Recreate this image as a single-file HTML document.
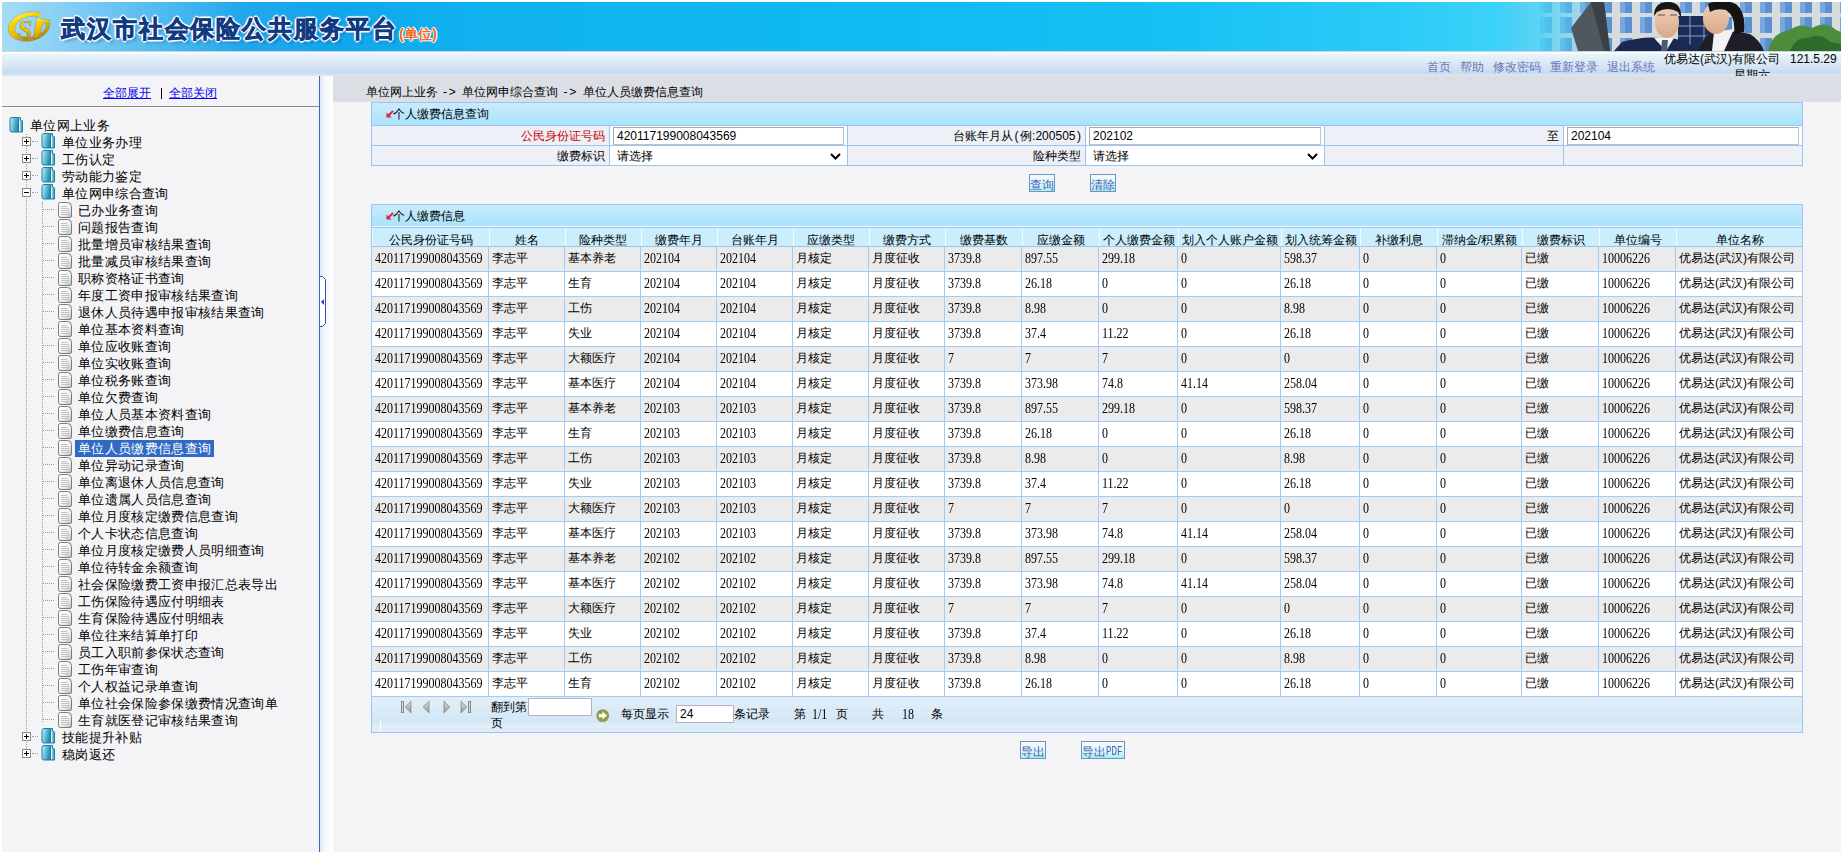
<!DOCTYPE html><html><head><meta charset="utf-8"><style>

*{box-sizing:border-box}
svg{display:block}
html,body{margin:0;padding:0;background:#fff;width:1847px;height:852px;overflow:hidden}
body{font-family:"Liberation Sans",sans-serif;font-size:12px;color:#000;position:relative}
.a{position:absolute;white-space:nowrap}
.hdr{left:2px;top:2px;width:1839px;height:49px;background:linear-gradient(90deg,#a6dcf5 0%,#8ad0f4 3%,#56bdf0 8%,#22a8ec 13%,#12a6ec 18%,#10b2f0 26%,#10b9f2 45%,#14c0f4 62%,#2ccbf7 76%,#44d6fa 84%,#50d8fa 100%)}
.tb{left:2px;top:51px;width:1839px;height:25px;background:linear-gradient(180deg,#c8d4de 0px,#c8d4de 1px,#ffffff 1px,#ffffff 2px,#eaf4fb 3px,#d8e8f6 13px,#c6daf0 22px,#d4e2f0 23px,#dde6ee 25px)}
.tl{color:#6877b8;font-size:12px}
.lp{left:2px;top:76px;width:317px;height:776px;background:#f4f4f7}
.spl{left:319px;top:76px;width:1px;height:776px;background:#3e64c4}
.rp{left:320px;top:76px;width:1521px;height:776px;background:#f4f4f7}
.bc{left:333px;top:76px;width:1508px;height:26px;background:#dcdee5}
.pnl{border:1px solid #9cc4f2}
.ttl{background:linear-gradient(180deg,#c9ebfc 0%,#a9e3fa 100%)}
.lbl{background:#eef0f8;text-align:right}
.inp{background:#fff;border:1px solid #a8a8b0;border-right-color:#c0c0c8;border-bottom-color:#c0c0c8}
.btn{border:1px solid #6d94bd;background:linear-gradient(180deg,#f4fdfd 0%,#e0f8f8 50%,#a8eef2 100%);color:#4b5cb9;font-size:12px;overflow:hidden;line-height:16px}
.tr{color:#000}
.sel{background:#316ac5;color:#fff}

</style></head><body>
<div class="a hdr"></div>
<svg class="a" style="left:6px;top:9px" width="46" height="36" viewBox="0 0 46 36">
<defs><linearGradient id="lg" x1="0" y1="0" x2="0.3" y2="1"><stop offset="0" stop-color="#fff6a0"/><stop offset="0.3" stop-color="#f8d400"/><stop offset="0.7" stop-color="#eab800"/><stop offset="1" stop-color="#c88c00"/></linearGradient>
<mask id="lm"><rect x="0" y="0" width="46" height="36" fill="#fff"/><polygon points="24,17 46,2 46,14" fill="#000"/></mask></defs>
<g mask="url(#lm)" transform="rotate(-12 23 17.5)">
<path fill-rule="evenodd" fill="url(#lg)" stroke="#3a6aa8" stroke-width="0.5" stroke-opacity="0.5" d="M2,17.5 a21,14.5 0 1,0 42,0 a21,14.5 0 1,0 -42,0 Z M8.5,18 a16,10.2 0 1,0 32,0 a16,10.2 0 1,0 -32,0 Z"/>
</g>
<text x="11.5" y="30" font-family="Liberation Serif" font-style="italic" font-weight="bold" font-size="27" fill="url(#lg)" stroke="#3a6aa8" stroke-width="0.6" stroke-opacity="0.6">S</text>
<polygon points="31,8.5 44,11.5 43,14.5 37.5,13.5 32.5,29.5 27,29.5" fill="url(#lg)" stroke="#3a6aa8" stroke-width="0.5" stroke-opacity="0.6"/>
</svg>
<div class="a" style="left:61px;top:14px;line-height:30px;font-family:'Liberation Serif',serif;font-weight:bold;font-size:24px;letter-spacing:1.9px;color:#123a80;-webkit-text-stroke:0.7px #123a80;text-shadow:2px 0 1px #fff,-2px 0 1px #fff,0 2px 1px #fff,0 -2px 1px #fff,1px 1px 1px #fff,-1px -1px 1px #fff,1px -1px 1px #fff,-1px 1px 1px #fff,3px 3px 3px rgba(0,40,120,.35)">武汉市社会保险公共服务平台</div>
<div class="a" style="left:399px;top:25px;line-height:18px;font-weight:bold;font-size:14px;color:#f36a1c;text-shadow:1px 0 0 #fff,-1px 0 0 #fff,0 1px 0 #fff,0 -1px 0 #fff"><span style="font-size:15px">(</span>单位<span style="font-size:15px">)</span></div>
<svg class="a" style="left:1500px;top:2px" width="341" height="49" viewBox="0 0 341 49"><defs><linearGradient id="fade" x1="0" y1="0" x2="341" y2="0" gradientUnits="userSpaceOnUse"><stop offset="0" stop-color="#40d0f8" stop-opacity="1"/><stop offset="0.12" stop-color="#48d2f8" stop-opacity="0.85"/><stop offset="0.33" stop-color="#60c8f0" stop-opacity="0.0"/></linearGradient><linearGradient id="skin" x1="0" y1="0" x2="0" y2="1"><stop offset="0" stop-color="#f0d0b8"/><stop offset="1" stop-color="#d8a888"/></linearGradient></defs><rect x="0" y="0" width="341" height="49" fill="#d6dcde"/><rect x="40" y="0" width="12" height="11" fill="#5c90d0"/><rect x="40" y="0" width="5" height="11" fill="#88b8e8" opacity="0.6"/><rect x="40" y="15" width="12" height="16" fill="#5c90d0"/><rect x="40" y="15" width="5" height="16" fill="#88b8e8" opacity="0.6"/><rect x="40" y="36" width="12" height="13" fill="#5c90d0"/><rect x="40" y="36" width="5" height="13" fill="#88b8e8" opacity="0.6"/><rect x="60" y="0" width="12" height="11" fill="#5c90d0"/><rect x="60" y="0" width="5" height="11" fill="#88b8e8" opacity="0.6"/><rect x="60" y="15" width="12" height="16" fill="#5c90d0"/><rect x="60" y="15" width="5" height="16" fill="#88b8e8" opacity="0.6"/><rect x="60" y="36" width="12" height="13" fill="#5c90d0"/><rect x="60" y="36" width="5" height="13" fill="#88b8e8" opacity="0.6"/><rect x="80" y="0" width="12" height="11" fill="#5c90d0"/><rect x="80" y="0" width="5" height="11" fill="#88b8e8" opacity="0.6"/><rect x="80" y="15" width="12" height="16" fill="#5c90d0"/><rect x="80" y="15" width="5" height="16" fill="#88b8e8" opacity="0.6"/><rect x="80" y="36" width="12" height="13" fill="#5c90d0"/><rect x="80" y="36" width="5" height="13" fill="#88b8e8" opacity="0.6"/><rect x="100" y="0" width="12" height="11" fill="#5c90d0"/><rect x="100" y="0" width="5" height="11" fill="#88b8e8" opacity="0.6"/><rect x="100" y="15" width="12" height="16" fill="#5c90d0"/><rect x="100" y="15" width="5" height="16" fill="#88b8e8" opacity="0.6"/><rect x="100" y="36" width="12" height="13" fill="#5c90d0"/><rect x="100" y="36" width="5" height="13" fill="#88b8e8" opacity="0.6"/><rect x="120" y="0" width="12" height="11" fill="#5c90d0"/><rect x="120" y="0" width="5" height="11" fill="#88b8e8" opacity="0.6"/><rect x="120" y="15" width="12" height="16" fill="#5c90d0"/><rect x="120" y="15" width="5" height="16" fill="#88b8e8" opacity="0.6"/><rect x="120" y="36" width="12" height="13" fill="#5c90d0"/><rect x="120" y="36" width="5" height="13" fill="#88b8e8" opacity="0.6"/><rect x="140" y="0" width="12" height="11" fill="#5c90d0"/><rect x="140" y="0" width="5" height="11" fill="#88b8e8" opacity="0.6"/><rect x="140" y="15" width="12" height="16" fill="#5c90d0"/><rect x="140" y="15" width="5" height="16" fill="#88b8e8" opacity="0.6"/><rect x="140" y="36" width="12" height="13" fill="#5c90d0"/><rect x="140" y="36" width="5" height="13" fill="#88b8e8" opacity="0.6"/><rect x="160" y="0" width="12" height="11" fill="#5c90d0"/><rect x="160" y="0" width="5" height="11" fill="#88b8e8" opacity="0.6"/><rect x="160" y="15" width="12" height="16" fill="#5c90d0"/><rect x="160" y="15" width="5" height="16" fill="#88b8e8" opacity="0.6"/><rect x="160" y="36" width="12" height="13" fill="#5c90d0"/><rect x="160" y="36" width="5" height="13" fill="#88b8e8" opacity="0.6"/><rect x="180" y="0" width="12" height="11" fill="#5c90d0"/><rect x="180" y="0" width="5" height="11" fill="#88b8e8" opacity="0.6"/><rect x="180" y="15" width="12" height="16" fill="#5c90d0"/><rect x="180" y="15" width="5" height="16" fill="#88b8e8" opacity="0.6"/><rect x="180" y="36" width="12" height="13" fill="#5c90d0"/><rect x="180" y="36" width="5" height="13" fill="#88b8e8" opacity="0.6"/><rect x="200" y="0" width="12" height="11" fill="#5c90d0"/><rect x="200" y="0" width="5" height="11" fill="#88b8e8" opacity="0.6"/><rect x="200" y="15" width="12" height="16" fill="#5c90d0"/><rect x="200" y="15" width="5" height="16" fill="#88b8e8" opacity="0.6"/><rect x="200" y="36" width="12" height="13" fill="#5c90d0"/><rect x="200" y="36" width="5" height="13" fill="#88b8e8" opacity="0.6"/><rect x="220" y="0" width="12" height="11" fill="#5c90d0"/><rect x="220" y="0" width="5" height="11" fill="#88b8e8" opacity="0.6"/><rect x="220" y="15" width="12" height="16" fill="#5c90d0"/><rect x="220" y="15" width="5" height="16" fill="#88b8e8" opacity="0.6"/><rect x="220" y="36" width="12" height="13" fill="#5c90d0"/><rect x="220" y="36" width="5" height="13" fill="#88b8e8" opacity="0.6"/><rect x="240" y="0" width="12" height="11" fill="#5c90d0"/><rect x="240" y="0" width="5" height="11" fill="#88b8e8" opacity="0.6"/><rect x="240" y="15" width="12" height="16" fill="#5c90d0"/><rect x="240" y="15" width="5" height="16" fill="#88b8e8" opacity="0.6"/><rect x="240" y="36" width="12" height="13" fill="#5c90d0"/><rect x="240" y="36" width="5" height="13" fill="#88b8e8" opacity="0.6"/><rect x="260" y="0" width="12" height="11" fill="#5c90d0"/><rect x="260" y="0" width="5" height="11" fill="#88b8e8" opacity="0.6"/><rect x="260" y="15" width="12" height="16" fill="#5c90d0"/><rect x="260" y="15" width="5" height="16" fill="#88b8e8" opacity="0.6"/><rect x="260" y="36" width="12" height="13" fill="#5c90d0"/><rect x="260" y="36" width="5" height="13" fill="#88b8e8" opacity="0.6"/><rect x="280" y="0" width="12" height="11" fill="#5c90d0"/><rect x="280" y="0" width="5" height="11" fill="#88b8e8" opacity="0.6"/><rect x="280" y="15" width="12" height="16" fill="#5c90d0"/><rect x="280" y="15" width="5" height="16" fill="#88b8e8" opacity="0.6"/><rect x="280" y="36" width="12" height="13" fill="#5c90d0"/><rect x="280" y="36" width="5" height="13" fill="#88b8e8" opacity="0.6"/><rect x="300" y="0" width="12" height="11" fill="#5c90d0"/><rect x="300" y="0" width="5" height="11" fill="#88b8e8" opacity="0.6"/><rect x="300" y="15" width="12" height="16" fill="#5c90d0"/><rect x="300" y="15" width="5" height="16" fill="#88b8e8" opacity="0.6"/><rect x="300" y="36" width="12" height="13" fill="#5c90d0"/><rect x="300" y="36" width="5" height="13" fill="#88b8e8" opacity="0.6"/><rect x="320" y="0" width="12" height="11" fill="#5c90d0"/><rect x="320" y="0" width="5" height="11" fill="#88b8e8" opacity="0.6"/><rect x="320" y="15" width="12" height="16" fill="#5c90d0"/><rect x="320" y="15" width="5" height="16" fill="#88b8e8" opacity="0.6"/><rect x="320" y="36" width="12" height="13" fill="#5c90d0"/><rect x="320" y="36" width="5" height="13" fill="#88b8e8" opacity="0.6"/><rect x="340" y="0" width="12" height="11" fill="#5c90d0"/><rect x="340" y="0" width="5" height="11" fill="#88b8e8" opacity="0.6"/><rect x="340" y="15" width="12" height="16" fill="#5c90d0"/><rect x="340" y="15" width="5" height="16" fill="#88b8e8" opacity="0.6"/><rect x="340" y="36" width="12" height="13" fill="#5c90d0"/><rect x="340" y="36" width="5" height="13" fill="#88b8e8" opacity="0.6"/><rect x="0" y="0" width="341" height="49" fill="url(#fade)"/><rect x="178" y="14" width="44" height="35" fill="#1a2c58"/><path d="M178,24h44M178,34h44M190,14v35M204,14v35" stroke="#8aa0c0" stroke-width="1"/><polygon points="71,26 91,0 104,0 110,49 78,49" fill="#50585f"/><polygon points="91,0 104,0 110,49 104,49" fill="#3a4046"/><g transform="translate(-6,0)"><path d="M120,49 L128,40 Q150,34 165,36 L178,36 Q196,40 204,49 Z" fill="#1c2850"/><path d="M160,36 L180,36 L172,49 Z" fill="#f4f4f4"/><path d="M168,38 L174,38 L173,49 L167,49 Z" fill="#4a5a78"/><ellipse cx="173" cy="20" rx="12" ry="16" fill="url(#skin)"/><path d="M160,14 Q160,0 174,0 Q188,0 187,16 L184,10 Q174,4 163,10 Z" fill="#181818"/><path d="M164,13h7M176,13h7" stroke="#555" stroke-width="1.2"/></g><g transform="translate(-12,0)"><path d="M210,49 L218,34 Q240,26 262,32 Q272,38 276,49 Z" fill="#1e1e26"/><path d="M226,30 L246,27 L236,49 L224,49 Z" fill="#f2f2f2"/><ellipse cx="228" cy="16" rx="13" ry="16" fill="url(#skin)"/><path d="M220,2 Q232,-4 248,2 Q258,10 256,30 L246,32 Q248,14 238,8 Q228,6 222,10 Z" fill="#141414"/></g><path d="M268,49 Q272,30 290,28 Q300,20 312,26 Q326,18 336,28 L341,30 L341,49 Z" fill="#4c8c3c"/><path d="M290,49 Q296,34 308,36 Q320,30 330,40 L341,42 L341,49 Z" fill="#2e6a2c"/></svg>
<div class="a tb"></div>
<div class="a tl" style="left:1427px;top:59px;line-height:16px">首页</div>
<div class="a tl" style="left:1460px;top:59px;line-height:16px">帮助</div>
<div class="a tl" style="left:1493px;top:59px;line-height:16px">修改密码</div>
<div class="a tl" style="left:1550px;top:59px;line-height:16px">重新登录</div>
<div class="a tl" style="left:1607px;top:59px;line-height:16px">退出系统</div>
<div class="a" style="left:1664px;top:51px;line-height:16px">优易达(武汉)有限公司</div>
<div class="a" style="left:1790px;top:51px;line-height:16px">121.5.29</div>
<div class="a" style="left:1734px;top:51px;width:40px;height:25px;overflow:hidden"><div style="position:absolute;top:16px;line-height:16px">星期六</div></div>
<div class="a lp"></div>
<div class="a" style="left:103px;top:85px;line-height:16px;color:#0000ee;text-decoration:underline">全部展开</div>
<div class="a" style="left:161px;top:88px;width:1px;height:11px;background:#000"></div>
<div class="a" style="left:169px;top:85px;line-height:16px;color:#0000ee;text-decoration:underline">全部关闭</div>
<div class="a" style="left:2px;top:106px;width:317px;height:1px;background:#8a8a8a"></div>
<div class="a" style="left:2px;top:107px;width:317px;height:1px;background:#fafafa"></div>
<div class="a" style="left:9px;top:117px"><svg width="15" height="16" viewBox="0 0 15 16"><defs><linearGradient id="fg0" x1="0" y1="0" x2="1" y2="0.3"><stop offset="0" stop-color="#e4f8fc"/><stop offset="0.35" stop-color="#7fd0e8"/><stop offset="1" stop-color="#1e8eb2"/></linearGradient><linearGradient id="fh0" x1="0" y1="0" x2="1" y2="0"><stop offset="0" stop-color="#c8f0fa"/><stop offset="1" stop-color="#2a98bc"/></linearGradient></defs>
<path d="M1,2.5 Q1,0.5 3,0.5 L9.5,0.5 L9.5,15 L3,15 Q1,15 1,13 Z" fill="url(#fg0)" stroke="#1f7f9e" stroke-width="1"/>
<path d="M9.5,0.5 L11.5,0.5 L11.5,3 L13.5,4 L13.5,15 L9.5,15 Z" fill="url(#fh0)" stroke="#1f7f9e" stroke-width="1"/>
<path d="M10.5,3.5 L10.5,14" stroke="#ffffff" stroke-width="1" opacity="0.8"/></svg></div>
<div class="a" style="left:30px;top:117px;line-height:18px;font-size:13.33px;letter-spacing:0.33px;">单位网上业务</div>
<div class="a" style="left:26px;top:134px;width:1px;height:621px;border-left:1px dotted #a0a0a0"></div>
<div class="a" style="left:42px;top:202px;width:1px;height:520px;border-left:1px dotted #a0a0a0"></div>
<div class="a" style="left:22px;top:137px;width:9px;height:9px;border:1px solid #8c8c7c;background:#fff"></div><div class="a" style="left:24px;top:141px;width:5px;height:1px;background:#000"></div><div class="a" style="left:26px;top:139px;width:1px;height:5px;background:#000"></div>
<div class="a" style="left:32px;top:141px;width:6px;height:1px;border-top:1px dotted #a0a0a0"></div>
<div class="a" style="left:41px;top:133px"><svg width="15" height="16" viewBox="0 0 15 16"><defs><linearGradient id="fg1" x1="0" y1="0" x2="1" y2="0.3"><stop offset="0" stop-color="#e4f8fc"/><stop offset="0.35" stop-color="#7fd0e8"/><stop offset="1" stop-color="#1e8eb2"/></linearGradient><linearGradient id="fh1" x1="0" y1="0" x2="1" y2="0"><stop offset="0" stop-color="#c8f0fa"/><stop offset="1" stop-color="#2a98bc"/></linearGradient></defs>
<path d="M1,2.5 Q1,0.5 3,0.5 L9.5,0.5 L9.5,15 L3,15 Q1,15 1,13 Z" fill="url(#fg1)" stroke="#1f7f9e" stroke-width="1"/>
<path d="M9.5,0.5 L11.5,0.5 L11.5,3 L13.5,4 L13.5,15 L9.5,15 Z" fill="url(#fh1)" stroke="#1f7f9e" stroke-width="1"/>
<path d="M10.5,3.5 L10.5,14" stroke="#ffffff" stroke-width="1" opacity="0.8"/></svg></div>
<div class="a" style="left:62px;top:134px;line-height:18px;font-size:13.33px;letter-spacing:0.33px;">单位业务办理</div>
<div class="a" style="left:22px;top:154px;width:9px;height:9px;border:1px solid #8c8c7c;background:#fff"></div><div class="a" style="left:24px;top:158px;width:5px;height:1px;background:#000"></div><div class="a" style="left:26px;top:156px;width:1px;height:5px;background:#000"></div>
<div class="a" style="left:32px;top:158px;width:6px;height:1px;border-top:1px dotted #a0a0a0"></div>
<div class="a" style="left:41px;top:150px"><svg width="15" height="16" viewBox="0 0 15 16"><defs><linearGradient id="fg2" x1="0" y1="0" x2="1" y2="0.3"><stop offset="0" stop-color="#e4f8fc"/><stop offset="0.35" stop-color="#7fd0e8"/><stop offset="1" stop-color="#1e8eb2"/></linearGradient><linearGradient id="fh2" x1="0" y1="0" x2="1" y2="0"><stop offset="0" stop-color="#c8f0fa"/><stop offset="1" stop-color="#2a98bc"/></linearGradient></defs>
<path d="M1,2.5 Q1,0.5 3,0.5 L9.5,0.5 L9.5,15 L3,15 Q1,15 1,13 Z" fill="url(#fg2)" stroke="#1f7f9e" stroke-width="1"/>
<path d="M9.5,0.5 L11.5,0.5 L11.5,3 L13.5,4 L13.5,15 L9.5,15 Z" fill="url(#fh2)" stroke="#1f7f9e" stroke-width="1"/>
<path d="M10.5,3.5 L10.5,14" stroke="#ffffff" stroke-width="1" opacity="0.8"/></svg></div>
<div class="a" style="left:62px;top:151px;line-height:18px;font-size:13.33px;letter-spacing:0.33px;">工伤认定</div>
<div class="a" style="left:22px;top:171px;width:9px;height:9px;border:1px solid #8c8c7c;background:#fff"></div><div class="a" style="left:24px;top:175px;width:5px;height:1px;background:#000"></div><div class="a" style="left:26px;top:173px;width:1px;height:5px;background:#000"></div>
<div class="a" style="left:32px;top:175px;width:6px;height:1px;border-top:1px dotted #a0a0a0"></div>
<div class="a" style="left:41px;top:167px"><svg width="15" height="16" viewBox="0 0 15 16"><defs><linearGradient id="fg3" x1="0" y1="0" x2="1" y2="0.3"><stop offset="0" stop-color="#e4f8fc"/><stop offset="0.35" stop-color="#7fd0e8"/><stop offset="1" stop-color="#1e8eb2"/></linearGradient><linearGradient id="fh3" x1="0" y1="0" x2="1" y2="0"><stop offset="0" stop-color="#c8f0fa"/><stop offset="1" stop-color="#2a98bc"/></linearGradient></defs>
<path d="M1,2.5 Q1,0.5 3,0.5 L9.5,0.5 L9.5,15 L3,15 Q1,15 1,13 Z" fill="url(#fg3)" stroke="#1f7f9e" stroke-width="1"/>
<path d="M9.5,0.5 L11.5,0.5 L11.5,3 L13.5,4 L13.5,15 L9.5,15 Z" fill="url(#fh3)" stroke="#1f7f9e" stroke-width="1"/>
<path d="M10.5,3.5 L10.5,14" stroke="#ffffff" stroke-width="1" opacity="0.8"/></svg></div>
<div class="a" style="left:62px;top:168px;line-height:18px;font-size:13.33px;letter-spacing:0.33px;">劳动能力鉴定</div>
<div class="a" style="left:22px;top:188px;width:9px;height:9px;border:1px solid #8c8c7c;background:#fff"></div><div class="a" style="left:24px;top:192px;width:5px;height:1px;background:#000"></div>
<div class="a" style="left:32px;top:192px;width:6px;height:1px;border-top:1px dotted #a0a0a0"></div>
<div class="a" style="left:41px;top:184px"><svg width="15" height="16" viewBox="0 0 15 16"><defs><linearGradient id="fg4" x1="0" y1="0" x2="1" y2="0.3"><stop offset="0" stop-color="#e4f8fc"/><stop offset="0.35" stop-color="#7fd0e8"/><stop offset="1" stop-color="#1e8eb2"/></linearGradient><linearGradient id="fh4" x1="0" y1="0" x2="1" y2="0"><stop offset="0" stop-color="#c8f0fa"/><stop offset="1" stop-color="#2a98bc"/></linearGradient></defs>
<path d="M1,2.5 Q1,0.5 3,0.5 L9.5,0.5 L9.5,15 L3,15 Q1,15 1,13 Z" fill="url(#fg4)" stroke="#1f7f9e" stroke-width="1"/>
<path d="M9.5,0.5 L11.5,0.5 L11.5,3 L13.5,4 L13.5,15 L9.5,15 Z" fill="url(#fh4)" stroke="#1f7f9e" stroke-width="1"/>
<path d="M10.5,3.5 L10.5,14" stroke="#ffffff" stroke-width="1" opacity="0.8"/></svg></div>
<div class="a" style="left:62px;top:185px;line-height:18px;font-size:13.33px;letter-spacing:0.33px;">单位网申综合查询</div>
<div class="a" style="left:43px;top:209px;width:11px;height:1px;border-top:1px dotted #a0a0a0"></div>
<div class="a" style="left:58px;top:202px"><svg width="15" height="17" viewBox="0 0 15 17"><defs><linearGradient id="pg" x1="0" y1="0" x2="1" y2="1"><stop offset="0" stop-color="#ffffff"/><stop offset="0.6" stop-color="#f0f0f0"/><stop offset="1" stop-color="#b8b8b8"/></linearGradient></defs>
<path d="M2.5,0.5 L9.5,0.5 Q13.5,0.5 13.5,4.5 L13.5,14 Q13.5,15.5 12,15.5 L3,15.5 Q0.5,15.5 0.5,13.5 L0.5,2.5 Q0.5,0.5 2.5,0.5 Z" fill="url(#pg)" stroke="#7c7c7c" stroke-width="1"/>
<path d="M3,4.5h6M3,6.5h8M3,8.5h8M3,10.5h8M3,12.5h8" stroke="#c4c4c4" stroke-width="1"/></svg></div>
<div class="a" style="left:78px;top:202px;line-height:18px;font-size:13.33px;letter-spacing:0.33px;">已办业务查询</div>
<div class="a" style="left:43px;top:226px;width:11px;height:1px;border-top:1px dotted #a0a0a0"></div>
<div class="a" style="left:58px;top:219px"><svg width="15" height="17" viewBox="0 0 15 17"><defs><linearGradient id="pg" x1="0" y1="0" x2="1" y2="1"><stop offset="0" stop-color="#ffffff"/><stop offset="0.6" stop-color="#f0f0f0"/><stop offset="1" stop-color="#b8b8b8"/></linearGradient></defs>
<path d="M2.5,0.5 L9.5,0.5 Q13.5,0.5 13.5,4.5 L13.5,14 Q13.5,15.5 12,15.5 L3,15.5 Q0.5,15.5 0.5,13.5 L0.5,2.5 Q0.5,0.5 2.5,0.5 Z" fill="url(#pg)" stroke="#7c7c7c" stroke-width="1"/>
<path d="M3,4.5h6M3,6.5h8M3,8.5h8M3,10.5h8M3,12.5h8" stroke="#c4c4c4" stroke-width="1"/></svg></div>
<div class="a" style="left:78px;top:219px;line-height:18px;font-size:13.33px;letter-spacing:0.33px;">问题报告查询</div>
<div class="a" style="left:43px;top:243px;width:11px;height:1px;border-top:1px dotted #a0a0a0"></div>
<div class="a" style="left:58px;top:236px"><svg width="15" height="17" viewBox="0 0 15 17"><defs><linearGradient id="pg" x1="0" y1="0" x2="1" y2="1"><stop offset="0" stop-color="#ffffff"/><stop offset="0.6" stop-color="#f0f0f0"/><stop offset="1" stop-color="#b8b8b8"/></linearGradient></defs>
<path d="M2.5,0.5 L9.5,0.5 Q13.5,0.5 13.5,4.5 L13.5,14 Q13.5,15.5 12,15.5 L3,15.5 Q0.5,15.5 0.5,13.5 L0.5,2.5 Q0.5,0.5 2.5,0.5 Z" fill="url(#pg)" stroke="#7c7c7c" stroke-width="1"/>
<path d="M3,4.5h6M3,6.5h8M3,8.5h8M3,10.5h8M3,12.5h8" stroke="#c4c4c4" stroke-width="1"/></svg></div>
<div class="a" style="left:78px;top:236px;line-height:18px;font-size:13.33px;letter-spacing:0.33px;">批量增员审核结果查询</div>
<div class="a" style="left:43px;top:260px;width:11px;height:1px;border-top:1px dotted #a0a0a0"></div>
<div class="a" style="left:58px;top:253px"><svg width="15" height="17" viewBox="0 0 15 17"><defs><linearGradient id="pg" x1="0" y1="0" x2="1" y2="1"><stop offset="0" stop-color="#ffffff"/><stop offset="0.6" stop-color="#f0f0f0"/><stop offset="1" stop-color="#b8b8b8"/></linearGradient></defs>
<path d="M2.5,0.5 L9.5,0.5 Q13.5,0.5 13.5,4.5 L13.5,14 Q13.5,15.5 12,15.5 L3,15.5 Q0.5,15.5 0.5,13.5 L0.5,2.5 Q0.5,0.5 2.5,0.5 Z" fill="url(#pg)" stroke="#7c7c7c" stroke-width="1"/>
<path d="M3,4.5h6M3,6.5h8M3,8.5h8M3,10.5h8M3,12.5h8" stroke="#c4c4c4" stroke-width="1"/></svg></div>
<div class="a" style="left:78px;top:253px;line-height:18px;font-size:13.33px;letter-spacing:0.33px;">批量减员审核结果查询</div>
<div class="a" style="left:43px;top:277px;width:11px;height:1px;border-top:1px dotted #a0a0a0"></div>
<div class="a" style="left:58px;top:270px"><svg width="15" height="17" viewBox="0 0 15 17"><defs><linearGradient id="pg" x1="0" y1="0" x2="1" y2="1"><stop offset="0" stop-color="#ffffff"/><stop offset="0.6" stop-color="#f0f0f0"/><stop offset="1" stop-color="#b8b8b8"/></linearGradient></defs>
<path d="M2.5,0.5 L9.5,0.5 Q13.5,0.5 13.5,4.5 L13.5,14 Q13.5,15.5 12,15.5 L3,15.5 Q0.5,15.5 0.5,13.5 L0.5,2.5 Q0.5,0.5 2.5,0.5 Z" fill="url(#pg)" stroke="#7c7c7c" stroke-width="1"/>
<path d="M3,4.5h6M3,6.5h8M3,8.5h8M3,10.5h8M3,12.5h8" stroke="#c4c4c4" stroke-width="1"/></svg></div>
<div class="a" style="left:78px;top:270px;line-height:18px;font-size:13.33px;letter-spacing:0.33px;">职称资格证书查询</div>
<div class="a" style="left:43px;top:294px;width:11px;height:1px;border-top:1px dotted #a0a0a0"></div>
<div class="a" style="left:58px;top:287px"><svg width="15" height="17" viewBox="0 0 15 17"><defs><linearGradient id="pg" x1="0" y1="0" x2="1" y2="1"><stop offset="0" stop-color="#ffffff"/><stop offset="0.6" stop-color="#f0f0f0"/><stop offset="1" stop-color="#b8b8b8"/></linearGradient></defs>
<path d="M2.5,0.5 L9.5,0.5 Q13.5,0.5 13.5,4.5 L13.5,14 Q13.5,15.5 12,15.5 L3,15.5 Q0.5,15.5 0.5,13.5 L0.5,2.5 Q0.5,0.5 2.5,0.5 Z" fill="url(#pg)" stroke="#7c7c7c" stroke-width="1"/>
<path d="M3,4.5h6M3,6.5h8M3,8.5h8M3,10.5h8M3,12.5h8" stroke="#c4c4c4" stroke-width="1"/></svg></div>
<div class="a" style="left:78px;top:287px;line-height:18px;font-size:13.33px;letter-spacing:0.33px;">年度工资申报审核结果查询</div>
<div class="a" style="left:43px;top:311px;width:11px;height:1px;border-top:1px dotted #a0a0a0"></div>
<div class="a" style="left:58px;top:304px"><svg width="15" height="17" viewBox="0 0 15 17"><defs><linearGradient id="pg" x1="0" y1="0" x2="1" y2="1"><stop offset="0" stop-color="#ffffff"/><stop offset="0.6" stop-color="#f0f0f0"/><stop offset="1" stop-color="#b8b8b8"/></linearGradient></defs>
<path d="M2.5,0.5 L9.5,0.5 Q13.5,0.5 13.5,4.5 L13.5,14 Q13.5,15.5 12,15.5 L3,15.5 Q0.5,15.5 0.5,13.5 L0.5,2.5 Q0.5,0.5 2.5,0.5 Z" fill="url(#pg)" stroke="#7c7c7c" stroke-width="1"/>
<path d="M3,4.5h6M3,6.5h8M3,8.5h8M3,10.5h8M3,12.5h8" stroke="#c4c4c4" stroke-width="1"/></svg></div>
<div class="a" style="left:78px;top:304px;line-height:18px;font-size:13.33px;letter-spacing:0.33px;">退休人员待遇申报审核结果查询</div>
<div class="a" style="left:43px;top:328px;width:11px;height:1px;border-top:1px dotted #a0a0a0"></div>
<div class="a" style="left:58px;top:321px"><svg width="15" height="17" viewBox="0 0 15 17"><defs><linearGradient id="pg" x1="0" y1="0" x2="1" y2="1"><stop offset="0" stop-color="#ffffff"/><stop offset="0.6" stop-color="#f0f0f0"/><stop offset="1" stop-color="#b8b8b8"/></linearGradient></defs>
<path d="M2.5,0.5 L9.5,0.5 Q13.5,0.5 13.5,4.5 L13.5,14 Q13.5,15.5 12,15.5 L3,15.5 Q0.5,15.5 0.5,13.5 L0.5,2.5 Q0.5,0.5 2.5,0.5 Z" fill="url(#pg)" stroke="#7c7c7c" stroke-width="1"/>
<path d="M3,4.5h6M3,6.5h8M3,8.5h8M3,10.5h8M3,12.5h8" stroke="#c4c4c4" stroke-width="1"/></svg></div>
<div class="a" style="left:78px;top:321px;line-height:18px;font-size:13.33px;letter-spacing:0.33px;">单位基本资料查询</div>
<div class="a" style="left:43px;top:345px;width:11px;height:1px;border-top:1px dotted #a0a0a0"></div>
<div class="a" style="left:58px;top:338px"><svg width="15" height="17" viewBox="0 0 15 17"><defs><linearGradient id="pg" x1="0" y1="0" x2="1" y2="1"><stop offset="0" stop-color="#ffffff"/><stop offset="0.6" stop-color="#f0f0f0"/><stop offset="1" stop-color="#b8b8b8"/></linearGradient></defs>
<path d="M2.5,0.5 L9.5,0.5 Q13.5,0.5 13.5,4.5 L13.5,14 Q13.5,15.5 12,15.5 L3,15.5 Q0.5,15.5 0.5,13.5 L0.5,2.5 Q0.5,0.5 2.5,0.5 Z" fill="url(#pg)" stroke="#7c7c7c" stroke-width="1"/>
<path d="M3,4.5h6M3,6.5h8M3,8.5h8M3,10.5h8M3,12.5h8" stroke="#c4c4c4" stroke-width="1"/></svg></div>
<div class="a" style="left:78px;top:338px;line-height:18px;font-size:13.33px;letter-spacing:0.33px;">单位应收账查询</div>
<div class="a" style="left:43px;top:362px;width:11px;height:1px;border-top:1px dotted #a0a0a0"></div>
<div class="a" style="left:58px;top:355px"><svg width="15" height="17" viewBox="0 0 15 17"><defs><linearGradient id="pg" x1="0" y1="0" x2="1" y2="1"><stop offset="0" stop-color="#ffffff"/><stop offset="0.6" stop-color="#f0f0f0"/><stop offset="1" stop-color="#b8b8b8"/></linearGradient></defs>
<path d="M2.5,0.5 L9.5,0.5 Q13.5,0.5 13.5,4.5 L13.5,14 Q13.5,15.5 12,15.5 L3,15.5 Q0.5,15.5 0.5,13.5 L0.5,2.5 Q0.5,0.5 2.5,0.5 Z" fill="url(#pg)" stroke="#7c7c7c" stroke-width="1"/>
<path d="M3,4.5h6M3,6.5h8M3,8.5h8M3,10.5h8M3,12.5h8" stroke="#c4c4c4" stroke-width="1"/></svg></div>
<div class="a" style="left:78px;top:355px;line-height:18px;font-size:13.33px;letter-spacing:0.33px;">单位实收账查询</div>
<div class="a" style="left:43px;top:379px;width:11px;height:1px;border-top:1px dotted #a0a0a0"></div>
<div class="a" style="left:58px;top:372px"><svg width="15" height="17" viewBox="0 0 15 17"><defs><linearGradient id="pg" x1="0" y1="0" x2="1" y2="1"><stop offset="0" stop-color="#ffffff"/><stop offset="0.6" stop-color="#f0f0f0"/><stop offset="1" stop-color="#b8b8b8"/></linearGradient></defs>
<path d="M2.5,0.5 L9.5,0.5 Q13.5,0.5 13.5,4.5 L13.5,14 Q13.5,15.5 12,15.5 L3,15.5 Q0.5,15.5 0.5,13.5 L0.5,2.5 Q0.5,0.5 2.5,0.5 Z" fill="url(#pg)" stroke="#7c7c7c" stroke-width="1"/>
<path d="M3,4.5h6M3,6.5h8M3,8.5h8M3,10.5h8M3,12.5h8" stroke="#c4c4c4" stroke-width="1"/></svg></div>
<div class="a" style="left:78px;top:372px;line-height:18px;font-size:13.33px;letter-spacing:0.33px;">单位税务账查询</div>
<div class="a" style="left:43px;top:396px;width:11px;height:1px;border-top:1px dotted #a0a0a0"></div>
<div class="a" style="left:58px;top:389px"><svg width="15" height="17" viewBox="0 0 15 17"><defs><linearGradient id="pg" x1="0" y1="0" x2="1" y2="1"><stop offset="0" stop-color="#ffffff"/><stop offset="0.6" stop-color="#f0f0f0"/><stop offset="1" stop-color="#b8b8b8"/></linearGradient></defs>
<path d="M2.5,0.5 L9.5,0.5 Q13.5,0.5 13.5,4.5 L13.5,14 Q13.5,15.5 12,15.5 L3,15.5 Q0.5,15.5 0.5,13.5 L0.5,2.5 Q0.5,0.5 2.5,0.5 Z" fill="url(#pg)" stroke="#7c7c7c" stroke-width="1"/>
<path d="M3,4.5h6M3,6.5h8M3,8.5h8M3,10.5h8M3,12.5h8" stroke="#c4c4c4" stroke-width="1"/></svg></div>
<div class="a" style="left:78px;top:389px;line-height:18px;font-size:13.33px;letter-spacing:0.33px;">单位欠费查询</div>
<div class="a" style="left:43px;top:413px;width:11px;height:1px;border-top:1px dotted #a0a0a0"></div>
<div class="a" style="left:58px;top:406px"><svg width="15" height="17" viewBox="0 0 15 17"><defs><linearGradient id="pg" x1="0" y1="0" x2="1" y2="1"><stop offset="0" stop-color="#ffffff"/><stop offset="0.6" stop-color="#f0f0f0"/><stop offset="1" stop-color="#b8b8b8"/></linearGradient></defs>
<path d="M2.5,0.5 L9.5,0.5 Q13.5,0.5 13.5,4.5 L13.5,14 Q13.5,15.5 12,15.5 L3,15.5 Q0.5,15.5 0.5,13.5 L0.5,2.5 Q0.5,0.5 2.5,0.5 Z" fill="url(#pg)" stroke="#7c7c7c" stroke-width="1"/>
<path d="M3,4.5h6M3,6.5h8M3,8.5h8M3,10.5h8M3,12.5h8" stroke="#c4c4c4" stroke-width="1"/></svg></div>
<div class="a" style="left:78px;top:406px;line-height:18px;font-size:13.33px;letter-spacing:0.33px;">单位人员基本资料查询</div>
<div class="a" style="left:43px;top:430px;width:11px;height:1px;border-top:1px dotted #a0a0a0"></div>
<div class="a" style="left:58px;top:423px"><svg width="15" height="17" viewBox="0 0 15 17"><defs><linearGradient id="pg" x1="0" y1="0" x2="1" y2="1"><stop offset="0" stop-color="#ffffff"/><stop offset="0.6" stop-color="#f0f0f0"/><stop offset="1" stop-color="#b8b8b8"/></linearGradient></defs>
<path d="M2.5,0.5 L9.5,0.5 Q13.5,0.5 13.5,4.5 L13.5,14 Q13.5,15.5 12,15.5 L3,15.5 Q0.5,15.5 0.5,13.5 L0.5,2.5 Q0.5,0.5 2.5,0.5 Z" fill="url(#pg)" stroke="#7c7c7c" stroke-width="1"/>
<path d="M3,4.5h6M3,6.5h8M3,8.5h8M3,10.5h8M3,12.5h8" stroke="#c4c4c4" stroke-width="1"/></svg></div>
<div class="a" style="left:78px;top:423px;line-height:18px;font-size:13.33px;letter-spacing:0.33px;">单位缴费信息查询</div>
<div class="a" style="left:43px;top:447px;width:11px;height:1px;border-top:1px dotted #a0a0a0"></div>
<div class="a" style="left:58px;top:440px"><svg width="15" height="17" viewBox="0 0 15 17"><defs><linearGradient id="pg" x1="0" y1="0" x2="1" y2="1"><stop offset="0" stop-color="#ffffff"/><stop offset="0.6" stop-color="#f0f0f0"/><stop offset="1" stop-color="#b8b8b8"/></linearGradient></defs>
<path d="M2.5,0.5 L9.5,0.5 Q13.5,0.5 13.5,4.5 L13.5,14 Q13.5,15.5 12,15.5 L3,15.5 Q0.5,15.5 0.5,13.5 L0.5,2.5 Q0.5,0.5 2.5,0.5 Z" fill="url(#pg)" stroke="#7c7c7c" stroke-width="1"/>
<path d="M3,4.5h6M3,6.5h8M3,8.5h8M3,10.5h8M3,12.5h8" stroke="#c4c4c4" stroke-width="1"/></svg></div>
<div class="a sel" style="left:75px;top:440px;width:139px;height:17px"></div>
<div class="a" style="left:78px;top:440px;line-height:18px;font-size:13.33px;letter-spacing:0.33px;color:#fff">单位人员缴费信息查询</div>
<div class="a" style="left:43px;top:464px;width:11px;height:1px;border-top:1px dotted #a0a0a0"></div>
<div class="a" style="left:58px;top:457px"><svg width="15" height="17" viewBox="0 0 15 17"><defs><linearGradient id="pg" x1="0" y1="0" x2="1" y2="1"><stop offset="0" stop-color="#ffffff"/><stop offset="0.6" stop-color="#f0f0f0"/><stop offset="1" stop-color="#b8b8b8"/></linearGradient></defs>
<path d="M2.5,0.5 L9.5,0.5 Q13.5,0.5 13.5,4.5 L13.5,14 Q13.5,15.5 12,15.5 L3,15.5 Q0.5,15.5 0.5,13.5 L0.5,2.5 Q0.5,0.5 2.5,0.5 Z" fill="url(#pg)" stroke="#7c7c7c" stroke-width="1"/>
<path d="M3,4.5h6M3,6.5h8M3,8.5h8M3,10.5h8M3,12.5h8" stroke="#c4c4c4" stroke-width="1"/></svg></div>
<div class="a" style="left:78px;top:457px;line-height:18px;font-size:13.33px;letter-spacing:0.33px;">单位异动记录查询</div>
<div class="a" style="left:43px;top:481px;width:11px;height:1px;border-top:1px dotted #a0a0a0"></div>
<div class="a" style="left:58px;top:474px"><svg width="15" height="17" viewBox="0 0 15 17"><defs><linearGradient id="pg" x1="0" y1="0" x2="1" y2="1"><stop offset="0" stop-color="#ffffff"/><stop offset="0.6" stop-color="#f0f0f0"/><stop offset="1" stop-color="#b8b8b8"/></linearGradient></defs>
<path d="M2.5,0.5 L9.5,0.5 Q13.5,0.5 13.5,4.5 L13.5,14 Q13.5,15.5 12,15.5 L3,15.5 Q0.5,15.5 0.5,13.5 L0.5,2.5 Q0.5,0.5 2.5,0.5 Z" fill="url(#pg)" stroke="#7c7c7c" stroke-width="1"/>
<path d="M3,4.5h6M3,6.5h8M3,8.5h8M3,10.5h8M3,12.5h8" stroke="#c4c4c4" stroke-width="1"/></svg></div>
<div class="a" style="left:78px;top:474px;line-height:18px;font-size:13.33px;letter-spacing:0.33px;">单位离退休人员信息查询</div>
<div class="a" style="left:43px;top:498px;width:11px;height:1px;border-top:1px dotted #a0a0a0"></div>
<div class="a" style="left:58px;top:491px"><svg width="15" height="17" viewBox="0 0 15 17"><defs><linearGradient id="pg" x1="0" y1="0" x2="1" y2="1"><stop offset="0" stop-color="#ffffff"/><stop offset="0.6" stop-color="#f0f0f0"/><stop offset="1" stop-color="#b8b8b8"/></linearGradient></defs>
<path d="M2.5,0.5 L9.5,0.5 Q13.5,0.5 13.5,4.5 L13.5,14 Q13.5,15.5 12,15.5 L3,15.5 Q0.5,15.5 0.5,13.5 L0.5,2.5 Q0.5,0.5 2.5,0.5 Z" fill="url(#pg)" stroke="#7c7c7c" stroke-width="1"/>
<path d="M3,4.5h6M3,6.5h8M3,8.5h8M3,10.5h8M3,12.5h8" stroke="#c4c4c4" stroke-width="1"/></svg></div>
<div class="a" style="left:78px;top:491px;line-height:18px;font-size:13.33px;letter-spacing:0.33px;">单位遗属人员信息查询</div>
<div class="a" style="left:43px;top:515px;width:11px;height:1px;border-top:1px dotted #a0a0a0"></div>
<div class="a" style="left:58px;top:508px"><svg width="15" height="17" viewBox="0 0 15 17"><defs><linearGradient id="pg" x1="0" y1="0" x2="1" y2="1"><stop offset="0" stop-color="#ffffff"/><stop offset="0.6" stop-color="#f0f0f0"/><stop offset="1" stop-color="#b8b8b8"/></linearGradient></defs>
<path d="M2.5,0.5 L9.5,0.5 Q13.5,0.5 13.5,4.5 L13.5,14 Q13.5,15.5 12,15.5 L3,15.5 Q0.5,15.5 0.5,13.5 L0.5,2.5 Q0.5,0.5 2.5,0.5 Z" fill="url(#pg)" stroke="#7c7c7c" stroke-width="1"/>
<path d="M3,4.5h6M3,6.5h8M3,8.5h8M3,10.5h8M3,12.5h8" stroke="#c4c4c4" stroke-width="1"/></svg></div>
<div class="a" style="left:78px;top:508px;line-height:18px;font-size:13.33px;letter-spacing:0.33px;">单位月度核定缴费信息查询</div>
<div class="a" style="left:43px;top:532px;width:11px;height:1px;border-top:1px dotted #a0a0a0"></div>
<div class="a" style="left:58px;top:525px"><svg width="15" height="17" viewBox="0 0 15 17"><defs><linearGradient id="pg" x1="0" y1="0" x2="1" y2="1"><stop offset="0" stop-color="#ffffff"/><stop offset="0.6" stop-color="#f0f0f0"/><stop offset="1" stop-color="#b8b8b8"/></linearGradient></defs>
<path d="M2.5,0.5 L9.5,0.5 Q13.5,0.5 13.5,4.5 L13.5,14 Q13.5,15.5 12,15.5 L3,15.5 Q0.5,15.5 0.5,13.5 L0.5,2.5 Q0.5,0.5 2.5,0.5 Z" fill="url(#pg)" stroke="#7c7c7c" stroke-width="1"/>
<path d="M3,4.5h6M3,6.5h8M3,8.5h8M3,10.5h8M3,12.5h8" stroke="#c4c4c4" stroke-width="1"/></svg></div>
<div class="a" style="left:78px;top:525px;line-height:18px;font-size:13.33px;letter-spacing:0.33px;">个人卡状态信息查询</div>
<div class="a" style="left:43px;top:549px;width:11px;height:1px;border-top:1px dotted #a0a0a0"></div>
<div class="a" style="left:58px;top:542px"><svg width="15" height="17" viewBox="0 0 15 17"><defs><linearGradient id="pg" x1="0" y1="0" x2="1" y2="1"><stop offset="0" stop-color="#ffffff"/><stop offset="0.6" stop-color="#f0f0f0"/><stop offset="1" stop-color="#b8b8b8"/></linearGradient></defs>
<path d="M2.5,0.5 L9.5,0.5 Q13.5,0.5 13.5,4.5 L13.5,14 Q13.5,15.5 12,15.5 L3,15.5 Q0.5,15.5 0.5,13.5 L0.5,2.5 Q0.5,0.5 2.5,0.5 Z" fill="url(#pg)" stroke="#7c7c7c" stroke-width="1"/>
<path d="M3,4.5h6M3,6.5h8M3,8.5h8M3,10.5h8M3,12.5h8" stroke="#c4c4c4" stroke-width="1"/></svg></div>
<div class="a" style="left:78px;top:542px;line-height:18px;font-size:13.33px;letter-spacing:0.33px;">单位月度核定缴费人员明细查询</div>
<div class="a" style="left:43px;top:566px;width:11px;height:1px;border-top:1px dotted #a0a0a0"></div>
<div class="a" style="left:58px;top:559px"><svg width="15" height="17" viewBox="0 0 15 17"><defs><linearGradient id="pg" x1="0" y1="0" x2="1" y2="1"><stop offset="0" stop-color="#ffffff"/><stop offset="0.6" stop-color="#f0f0f0"/><stop offset="1" stop-color="#b8b8b8"/></linearGradient></defs>
<path d="M2.5,0.5 L9.5,0.5 Q13.5,0.5 13.5,4.5 L13.5,14 Q13.5,15.5 12,15.5 L3,15.5 Q0.5,15.5 0.5,13.5 L0.5,2.5 Q0.5,0.5 2.5,0.5 Z" fill="url(#pg)" stroke="#7c7c7c" stroke-width="1"/>
<path d="M3,4.5h6M3,6.5h8M3,8.5h8M3,10.5h8M3,12.5h8" stroke="#c4c4c4" stroke-width="1"/></svg></div>
<div class="a" style="left:78px;top:559px;line-height:18px;font-size:13.33px;letter-spacing:0.33px;">单位待转金余额查询</div>
<div class="a" style="left:43px;top:583px;width:11px;height:1px;border-top:1px dotted #a0a0a0"></div>
<div class="a" style="left:58px;top:576px"><svg width="15" height="17" viewBox="0 0 15 17"><defs><linearGradient id="pg" x1="0" y1="0" x2="1" y2="1"><stop offset="0" stop-color="#ffffff"/><stop offset="0.6" stop-color="#f0f0f0"/><stop offset="1" stop-color="#b8b8b8"/></linearGradient></defs>
<path d="M2.5,0.5 L9.5,0.5 Q13.5,0.5 13.5,4.5 L13.5,14 Q13.5,15.5 12,15.5 L3,15.5 Q0.5,15.5 0.5,13.5 L0.5,2.5 Q0.5,0.5 2.5,0.5 Z" fill="url(#pg)" stroke="#7c7c7c" stroke-width="1"/>
<path d="M3,4.5h6M3,6.5h8M3,8.5h8M3,10.5h8M3,12.5h8" stroke="#c4c4c4" stroke-width="1"/></svg></div>
<div class="a" style="left:78px;top:576px;line-height:18px;font-size:13.33px;letter-spacing:0.33px;">社会保险缴费工资申报汇总表导出</div>
<div class="a" style="left:43px;top:600px;width:11px;height:1px;border-top:1px dotted #a0a0a0"></div>
<div class="a" style="left:58px;top:593px"><svg width="15" height="17" viewBox="0 0 15 17"><defs><linearGradient id="pg" x1="0" y1="0" x2="1" y2="1"><stop offset="0" stop-color="#ffffff"/><stop offset="0.6" stop-color="#f0f0f0"/><stop offset="1" stop-color="#b8b8b8"/></linearGradient></defs>
<path d="M2.5,0.5 L9.5,0.5 Q13.5,0.5 13.5,4.5 L13.5,14 Q13.5,15.5 12,15.5 L3,15.5 Q0.5,15.5 0.5,13.5 L0.5,2.5 Q0.5,0.5 2.5,0.5 Z" fill="url(#pg)" stroke="#7c7c7c" stroke-width="1"/>
<path d="M3,4.5h6M3,6.5h8M3,8.5h8M3,10.5h8M3,12.5h8" stroke="#c4c4c4" stroke-width="1"/></svg></div>
<div class="a" style="left:78px;top:593px;line-height:18px;font-size:13.33px;letter-spacing:0.33px;">工伤保险待遇应付明细表</div>
<div class="a" style="left:43px;top:617px;width:11px;height:1px;border-top:1px dotted #a0a0a0"></div>
<div class="a" style="left:58px;top:610px"><svg width="15" height="17" viewBox="0 0 15 17"><defs><linearGradient id="pg" x1="0" y1="0" x2="1" y2="1"><stop offset="0" stop-color="#ffffff"/><stop offset="0.6" stop-color="#f0f0f0"/><stop offset="1" stop-color="#b8b8b8"/></linearGradient></defs>
<path d="M2.5,0.5 L9.5,0.5 Q13.5,0.5 13.5,4.5 L13.5,14 Q13.5,15.5 12,15.5 L3,15.5 Q0.5,15.5 0.5,13.5 L0.5,2.5 Q0.5,0.5 2.5,0.5 Z" fill="url(#pg)" stroke="#7c7c7c" stroke-width="1"/>
<path d="M3,4.5h6M3,6.5h8M3,8.5h8M3,10.5h8M3,12.5h8" stroke="#c4c4c4" stroke-width="1"/></svg></div>
<div class="a" style="left:78px;top:610px;line-height:18px;font-size:13.33px;letter-spacing:0.33px;">生育保险待遇应付明细表</div>
<div class="a" style="left:43px;top:634px;width:11px;height:1px;border-top:1px dotted #a0a0a0"></div>
<div class="a" style="left:58px;top:627px"><svg width="15" height="17" viewBox="0 0 15 17"><defs><linearGradient id="pg" x1="0" y1="0" x2="1" y2="1"><stop offset="0" stop-color="#ffffff"/><stop offset="0.6" stop-color="#f0f0f0"/><stop offset="1" stop-color="#b8b8b8"/></linearGradient></defs>
<path d="M2.5,0.5 L9.5,0.5 Q13.5,0.5 13.5,4.5 L13.5,14 Q13.5,15.5 12,15.5 L3,15.5 Q0.5,15.5 0.5,13.5 L0.5,2.5 Q0.5,0.5 2.5,0.5 Z" fill="url(#pg)" stroke="#7c7c7c" stroke-width="1"/>
<path d="M3,4.5h6M3,6.5h8M3,8.5h8M3,10.5h8M3,12.5h8" stroke="#c4c4c4" stroke-width="1"/></svg></div>
<div class="a" style="left:78px;top:627px;line-height:18px;font-size:13.33px;letter-spacing:0.33px;">单位往来结算单打印</div>
<div class="a" style="left:43px;top:651px;width:11px;height:1px;border-top:1px dotted #a0a0a0"></div>
<div class="a" style="left:58px;top:644px"><svg width="15" height="17" viewBox="0 0 15 17"><defs><linearGradient id="pg" x1="0" y1="0" x2="1" y2="1"><stop offset="0" stop-color="#ffffff"/><stop offset="0.6" stop-color="#f0f0f0"/><stop offset="1" stop-color="#b8b8b8"/></linearGradient></defs>
<path d="M2.5,0.5 L9.5,0.5 Q13.5,0.5 13.5,4.5 L13.5,14 Q13.5,15.5 12,15.5 L3,15.5 Q0.5,15.5 0.5,13.5 L0.5,2.5 Q0.5,0.5 2.5,0.5 Z" fill="url(#pg)" stroke="#7c7c7c" stroke-width="1"/>
<path d="M3,4.5h6M3,6.5h8M3,8.5h8M3,10.5h8M3,12.5h8" stroke="#c4c4c4" stroke-width="1"/></svg></div>
<div class="a" style="left:78px;top:644px;line-height:18px;font-size:13.33px;letter-spacing:0.33px;">员工入职前参保状态查询</div>
<div class="a" style="left:43px;top:668px;width:11px;height:1px;border-top:1px dotted #a0a0a0"></div>
<div class="a" style="left:58px;top:661px"><svg width="15" height="17" viewBox="0 0 15 17"><defs><linearGradient id="pg" x1="0" y1="0" x2="1" y2="1"><stop offset="0" stop-color="#ffffff"/><stop offset="0.6" stop-color="#f0f0f0"/><stop offset="1" stop-color="#b8b8b8"/></linearGradient></defs>
<path d="M2.5,0.5 L9.5,0.5 Q13.5,0.5 13.5,4.5 L13.5,14 Q13.5,15.5 12,15.5 L3,15.5 Q0.5,15.5 0.5,13.5 L0.5,2.5 Q0.5,0.5 2.5,0.5 Z" fill="url(#pg)" stroke="#7c7c7c" stroke-width="1"/>
<path d="M3,4.5h6M3,6.5h8M3,8.5h8M3,10.5h8M3,12.5h8" stroke="#c4c4c4" stroke-width="1"/></svg></div>
<div class="a" style="left:78px;top:661px;line-height:18px;font-size:13.33px;letter-spacing:0.33px;">工伤年审查询</div>
<div class="a" style="left:43px;top:685px;width:11px;height:1px;border-top:1px dotted #a0a0a0"></div>
<div class="a" style="left:58px;top:678px"><svg width="15" height="17" viewBox="0 0 15 17"><defs><linearGradient id="pg" x1="0" y1="0" x2="1" y2="1"><stop offset="0" stop-color="#ffffff"/><stop offset="0.6" stop-color="#f0f0f0"/><stop offset="1" stop-color="#b8b8b8"/></linearGradient></defs>
<path d="M2.5,0.5 L9.5,0.5 Q13.5,0.5 13.5,4.5 L13.5,14 Q13.5,15.5 12,15.5 L3,15.5 Q0.5,15.5 0.5,13.5 L0.5,2.5 Q0.5,0.5 2.5,0.5 Z" fill="url(#pg)" stroke="#7c7c7c" stroke-width="1"/>
<path d="M3,4.5h6M3,6.5h8M3,8.5h8M3,10.5h8M3,12.5h8" stroke="#c4c4c4" stroke-width="1"/></svg></div>
<div class="a" style="left:78px;top:678px;line-height:18px;font-size:13.33px;letter-spacing:0.33px;">个人权益记录单查询</div>
<div class="a" style="left:43px;top:702px;width:11px;height:1px;border-top:1px dotted #a0a0a0"></div>
<div class="a" style="left:58px;top:695px"><svg width="15" height="17" viewBox="0 0 15 17"><defs><linearGradient id="pg" x1="0" y1="0" x2="1" y2="1"><stop offset="0" stop-color="#ffffff"/><stop offset="0.6" stop-color="#f0f0f0"/><stop offset="1" stop-color="#b8b8b8"/></linearGradient></defs>
<path d="M2.5,0.5 L9.5,0.5 Q13.5,0.5 13.5,4.5 L13.5,14 Q13.5,15.5 12,15.5 L3,15.5 Q0.5,15.5 0.5,13.5 L0.5,2.5 Q0.5,0.5 2.5,0.5 Z" fill="url(#pg)" stroke="#7c7c7c" stroke-width="1"/>
<path d="M3,4.5h6M3,6.5h8M3,8.5h8M3,10.5h8M3,12.5h8" stroke="#c4c4c4" stroke-width="1"/></svg></div>
<div class="a" style="left:78px;top:695px;line-height:18px;font-size:13.33px;letter-spacing:0.33px;">单位社会保险参保缴费情况查询单</div>
<div class="a" style="left:43px;top:719px;width:11px;height:1px;border-top:1px dotted #a0a0a0"></div>
<div class="a" style="left:58px;top:712px"><svg width="15" height="17" viewBox="0 0 15 17"><defs><linearGradient id="pg" x1="0" y1="0" x2="1" y2="1"><stop offset="0" stop-color="#ffffff"/><stop offset="0.6" stop-color="#f0f0f0"/><stop offset="1" stop-color="#b8b8b8"/></linearGradient></defs>
<path d="M2.5,0.5 L9.5,0.5 Q13.5,0.5 13.5,4.5 L13.5,14 Q13.5,15.5 12,15.5 L3,15.5 Q0.5,15.5 0.5,13.5 L0.5,2.5 Q0.5,0.5 2.5,0.5 Z" fill="url(#pg)" stroke="#7c7c7c" stroke-width="1"/>
<path d="M3,4.5h6M3,6.5h8M3,8.5h8M3,10.5h8M3,12.5h8" stroke="#c4c4c4" stroke-width="1"/></svg></div>
<div class="a" style="left:78px;top:712px;line-height:18px;font-size:13.33px;letter-spacing:0.33px;">生育就医登记审核结果查询</div>
<div class="a" style="left:22px;top:732px;width:9px;height:9px;border:1px solid #8c8c7c;background:#fff"></div><div class="a" style="left:24px;top:736px;width:5px;height:1px;background:#000"></div><div class="a" style="left:26px;top:734px;width:1px;height:5px;background:#000"></div>
<div class="a" style="left:32px;top:736px;width:6px;height:1px;border-top:1px dotted #a0a0a0"></div>
<div class="a" style="left:41px;top:728px"><svg width="15" height="16" viewBox="0 0 15 16"><defs><linearGradient id="fg10" x1="0" y1="0" x2="1" y2="0.3"><stop offset="0" stop-color="#e4f8fc"/><stop offset="0.35" stop-color="#7fd0e8"/><stop offset="1" stop-color="#1e8eb2"/></linearGradient><linearGradient id="fh10" x1="0" y1="0" x2="1" y2="0"><stop offset="0" stop-color="#c8f0fa"/><stop offset="1" stop-color="#2a98bc"/></linearGradient></defs>
<path d="M1,2.5 Q1,0.5 3,0.5 L9.5,0.5 L9.5,15 L3,15 Q1,15 1,13 Z" fill="url(#fg10)" stroke="#1f7f9e" stroke-width="1"/>
<path d="M9.5,0.5 L11.5,0.5 L11.5,3 L13.5,4 L13.5,15 L9.5,15 Z" fill="url(#fh10)" stroke="#1f7f9e" stroke-width="1"/>
<path d="M10.5,3.5 L10.5,14" stroke="#ffffff" stroke-width="1" opacity="0.8"/></svg></div>
<div class="a" style="left:62px;top:729px;line-height:18px;font-size:13.33px;letter-spacing:0.33px;">技能提升补贴</div>
<div class="a" style="left:22px;top:749px;width:9px;height:9px;border:1px solid #8c8c7c;background:#fff"></div><div class="a" style="left:24px;top:753px;width:5px;height:1px;background:#000"></div><div class="a" style="left:26px;top:751px;width:1px;height:5px;background:#000"></div>
<div class="a" style="left:32px;top:753px;width:6px;height:1px;border-top:1px dotted #a0a0a0"></div>
<div class="a" style="left:41px;top:745px"><svg width="15" height="16" viewBox="0 0 15 16"><defs><linearGradient id="fg11" x1="0" y1="0" x2="1" y2="0.3"><stop offset="0" stop-color="#e4f8fc"/><stop offset="0.35" stop-color="#7fd0e8"/><stop offset="1" stop-color="#1e8eb2"/></linearGradient><linearGradient id="fh11" x1="0" y1="0" x2="1" y2="0"><stop offset="0" stop-color="#c8f0fa"/><stop offset="1" stop-color="#2a98bc"/></linearGradient></defs>
<path d="M1,2.5 Q1,0.5 3,0.5 L9.5,0.5 L9.5,15 L3,15 Q1,15 1,13 Z" fill="url(#fg11)" stroke="#1f7f9e" stroke-width="1"/>
<path d="M9.5,0.5 L11.5,0.5 L11.5,3 L13.5,4 L13.5,15 L9.5,15 Z" fill="url(#fh11)" stroke="#1f7f9e" stroke-width="1"/>
<path d="M10.5,3.5 L10.5,14" stroke="#ffffff" stroke-width="1" opacity="0.8"/></svg></div>
<div class="a" style="left:62px;top:746px;line-height:18px;font-size:13.33px;letter-spacing:0.33px;">稳岗返还</div>
<div class="a spl"></div>
<div class="a rp"></div>
<div class="a" style="left:320px;top:76px;width:3px;height:776px;background:#e2ecfa"></div>
<div class="a" style="left:323px;top:76px;width:10px;height:776px;background:linear-gradient(90deg,#f4f7fc 0%,#f9fafd 50%,#ffffff 100%)"></div>
<svg class="a" style="left:319px;top:276px" width="8" height="52" viewBox="0 0 8 52"><path d="M0.5,0.5 L3.5,0.5 L6.5,3.5 L6.5,47.5 L3.5,50.5 L0.5,50.5" fill="#fff" stroke="#3050b8" stroke-width="1"/><path d="M5,23 L5,29 L2,26 Z" fill="#2040c0"/><rect x="0" y="0" width="1" height="52" fill="#3e64c4"/></svg>
<div class="a bc"></div>
<div class="a" style="left:366px;top:84px;line-height:16px">单位网上业务<span style="letter-spacing:1.7px"> -&gt; </span>单位网申综合查询<span style="letter-spacing:1.7px"> -&gt; </span>单位人员缴费信息查询</div>
<div class="a pnl ttl" style="left:371px;top:102px;width:1432px;height:24px"></div>
<div class="a" style="left:386px;top:110px"><svg width="8" height="8" viewBox="0 0 8 8"><path d="M7,1 L2,6" stroke="#e0203a" stroke-width="2"/><path d="M0.5,2.5 L0.5,7.5 L5.5,7.5 Z" fill="#e0203a"/></svg></div>
<div class="a" style="left:393px;top:106px;line-height:16px">个人缴费信息查询</div>
<div class="a" style="left:371px;top:125px;width:239px;height:21px;border:1px solid #9cc4f2;background:#eef0f8"></div>
<div class="a" style="left:609px;top:125px;width:239px;height:21px;border:1px solid #9cc4f2;background:#fff"></div>
<div class="a" style="left:847px;top:125px;width:239px;height:21px;border:1px solid #9cc4f2;background:#eef0f8"></div>
<div class="a" style="left:1085px;top:125px;width:240px;height:21px;border:1px solid #9cc4f2;background:#fff"></div>
<div class="a" style="left:1324px;top:125px;width:240px;height:21px;border:1px solid #9cc4f2;background:#eef0f8"></div>
<div class="a" style="left:1563px;top:125px;width:240px;height:21px;border:1px solid #9cc4f2;background:#fff"></div>
<div class="a" style="left:371px;top:145px;width:239px;height:21px;border:1px solid #9cc4f2;background:#eef0f8"></div>
<div class="a" style="left:609px;top:145px;width:239px;height:21px;border:1px solid #9cc4f2;background:#fff"></div>
<div class="a" style="left:847px;top:145px;width:239px;height:21px;border:1px solid #9cc4f2;background:#eef0f8"></div>
<div class="a" style="left:1085px;top:145px;width:240px;height:21px;border:1px solid #9cc4f2;background:#fff"></div>
<div class="a" style="left:1324px;top:145px;width:240px;height:21px;border:1px solid #9cc4f2;background:#eef0f8"></div>
<div class="a" style="left:1563px;top:145px;width:240px;height:21px;border:1px solid #9cc4f2;background:#eef0f8"></div>
<div class="a" style="left:309px;width:296px;text-align:right;top:128px;line-height:16px;color:#cc0000">公民身份证号码</div>
<div class="a" style="left:785px;width:296px;text-align:right;top:128px;line-height:16px;color:#000">台账年月从<span style="margin:0 1.5px">(</span>例:200505<span style="margin:0 0 0 1.5px">)</span></div>
<div class="a" style="left:1263px;width:296px;text-align:right;top:128px;line-height:16px;color:#000">至</div>
<div class="a" style="left:309px;width:296px;text-align:right;top:148px;line-height:16px;color:#000">缴费标识</div>
<div class="a" style="left:785px;width:296px;text-align:right;top:148px;line-height:16px;color:#000">险种类型</div>
<div class="a inp" style="left:613px;top:127px;width:231px;height:18px"></div>
<div class="a" style="left:617px;top:128px;line-height:16px">420117199008043569</div>
<div class="a inp" style="left:1089px;top:127px;width:232px;height:18px"></div>
<div class="a" style="left:1093px;top:128px;line-height:16px">202102</div>
<div class="a inp" style="left:1567px;top:127px;width:232px;height:18px"></div>
<div class="a" style="left:1571px;top:128px;line-height:16px">202104</div>
<div class="a" style="left:617px;top:148px;line-height:16px">请选择</div>
<div class="a" style="left:830px;top:153px"><svg width="11" height="7" viewBox="0 0 11 7"><path d="M1,1 L5.5,5.5 L10,1" fill="none" stroke="#000" stroke-width="2"/></svg></div>
<div class="a" style="left:1093px;top:148px;line-height:16px">请选择</div>
<div class="a" style="left:1307px;top:153px"><svg width="11" height="7" viewBox="0 0 11 7"><path d="M1,1 L5.5,5.5 L10,1" fill="none" stroke="#000" stroke-width="2"/></svg></div>
<div class="a btn" style="left:1029px;top:174px;width:26px;height:18px;padding-top:2px">查询</div>
<div class="a btn" style="left:1090px;top:174px;width:26px;height:18px;padding-top:2px">清除</div>
<div class="a pnl ttl" style="left:371px;top:204px;width:1432px;height:23px"></div>
<div class="a" style="left:386px;top:212px"><svg width="8" height="8" viewBox="0 0 8 8"><path d="M7,1 L2,6" stroke="#e0203a" stroke-width="2"/><path d="M0.5,2.5 L0.5,7.5 L5.5,7.5 Z" fill="#e0203a"/></svg></div>
<div class="a" style="left:393px;top:208px;line-height:16px">个人缴费信息</div>
<div class="a" style="left:372px;top:226px;width:1430px;height:1px;background:#f8f6f8"></div>
<div class="a" style="left:371px;top:227px;width:1432px;height:20px;border:1px solid #9cc4f2;background:#cbeefc"></div>
<div class="a" style="left:372px;top:228px;width:1px;height:18px;background:#f4fbff"></div>
<div class="a" style="left:372px;width:117px;text-align:center;top:232px;line-height:16px">公民身份证号码</div>
<div class="a" style="left:489px;top:228px;width:1px;height:18px;background:#f4fbff"></div>
<div class="a" style="left:489px;width:76px;text-align:center;top:232px;line-height:16px">姓名</div>
<div class="a" style="left:565px;top:228px;width:1px;height:18px;background:#f4fbff"></div>
<div class="a" style="left:565px;width:76px;text-align:center;top:232px;line-height:16px">险种类型</div>
<div class="a" style="left:641px;top:228px;width:1px;height:18px;background:#f4fbff"></div>
<div class="a" style="left:641px;width:76px;text-align:center;top:232px;line-height:16px">缴费年月</div>
<div class="a" style="left:717px;top:228px;width:1px;height:18px;background:#f4fbff"></div>
<div class="a" style="left:717px;width:76px;text-align:center;top:232px;line-height:16px">台账年月</div>
<div class="a" style="left:793px;top:228px;width:1px;height:18px;background:#f4fbff"></div>
<div class="a" style="left:793px;width:76px;text-align:center;top:232px;line-height:16px">应缴类型</div>
<div class="a" style="left:869px;top:228px;width:1px;height:18px;background:#f4fbff"></div>
<div class="a" style="left:869px;width:76px;text-align:center;top:232px;line-height:16px">缴费方式</div>
<div class="a" style="left:945px;top:228px;width:1px;height:18px;background:#f4fbff"></div>
<div class="a" style="left:945px;width:77px;text-align:center;top:232px;line-height:16px">缴费基数</div>
<div class="a" style="left:1022px;top:228px;width:1px;height:18px;background:#f4fbff"></div>
<div class="a" style="left:1022px;width:77px;text-align:center;top:232px;line-height:16px">应缴金额</div>
<div class="a" style="left:1099px;top:228px;width:1px;height:18px;background:#f4fbff"></div>
<div class="a" style="left:1099px;width:79px;text-align:center;top:232px;line-height:16px">个人缴费金额</div>
<div class="a" style="left:1178px;top:228px;width:1px;height:18px;background:#f4fbff"></div>
<div class="a" style="left:1178px;width:103px;text-align:center;top:232px;line-height:16px">划入个人账户金额</div>
<div class="a" style="left:1281px;top:228px;width:1px;height:18px;background:#f4fbff"></div>
<div class="a" style="left:1281px;width:79px;text-align:center;top:232px;line-height:16px">划入统筹金额</div>
<div class="a" style="left:1360px;top:228px;width:1px;height:18px;background:#f4fbff"></div>
<div class="a" style="left:1360px;width:77px;text-align:center;top:232px;line-height:16px">补缴利息</div>
<div class="a" style="left:1437px;top:228px;width:1px;height:18px;background:#f4fbff"></div>
<div class="a" style="left:1437px;width:85px;text-align:center;top:232px;line-height:16px">滞纳金/积累额</div>
<div class="a" style="left:1522px;top:228px;width:1px;height:18px;background:#f4fbff"></div>
<div class="a" style="left:1522px;width:77px;text-align:center;top:232px;line-height:16px">缴费标识</div>
<div class="a" style="left:1599px;top:228px;width:1px;height:18px;background:#f4fbff"></div>
<div class="a" style="left:1599px;width:77px;text-align:center;top:232px;line-height:16px">单位编号</div>
<div class="a" style="left:1676px;top:228px;width:1px;height:18px;background:#f4fbff"></div>
<div class="a" style="left:1676px;width:127px;text-align:center;top:232px;line-height:16px">单位名称</div>
<div class="a" style="left:371px;top:247px;width:1432px;height:25px;background:#ebebeb;border-bottom:1px solid #a0ccf8;border-left:1px solid #a0ccf8;border-right:1px solid #a0ccf8"></div>
<div class="a" style="left:375px;top:251px;line-height:16px;font-family:'Liberation Serif',serif;font-size:14px;transform:scaleX(0.857);transform-origin:0 0;">420117199008043569</div>
<div class="a" style="left:488px;top:246px;width:1px;height:25px;background:#a0ccf8"></div>
<div class="a" style="left:492px;top:250px;line-height:16px;">李志平</div>
<div class="a" style="left:564px;top:246px;width:1px;height:25px;background:#a0ccf8"></div>
<div class="a" style="left:568px;top:250px;line-height:16px;">基本养老</div>
<div class="a" style="left:640px;top:246px;width:1px;height:25px;background:#a0ccf8"></div>
<div class="a" style="left:644px;top:251px;line-height:16px;font-family:'Liberation Serif',serif;font-size:14px;transform:scaleX(0.857);transform-origin:0 0;">202104</div>
<div class="a" style="left:716px;top:246px;width:1px;height:25px;background:#a0ccf8"></div>
<div class="a" style="left:720px;top:251px;line-height:16px;font-family:'Liberation Serif',serif;font-size:14px;transform:scaleX(0.857);transform-origin:0 0;">202104</div>
<div class="a" style="left:792px;top:246px;width:1px;height:25px;background:#a0ccf8"></div>
<div class="a" style="left:796px;top:250px;line-height:16px;">月核定</div>
<div class="a" style="left:868px;top:246px;width:1px;height:25px;background:#a0ccf8"></div>
<div class="a" style="left:872px;top:250px;line-height:16px;">月度征收</div>
<div class="a" style="left:944px;top:246px;width:1px;height:25px;background:#a0ccf8"></div>
<div class="a" style="left:948px;top:251px;line-height:16px;font-family:'Liberation Serif',serif;font-size:14px;transform:scaleX(0.857);transform-origin:0 0;">3739.8</div>
<div class="a" style="left:1021px;top:246px;width:1px;height:25px;background:#a0ccf8"></div>
<div class="a" style="left:1025px;top:251px;line-height:16px;font-family:'Liberation Serif',serif;font-size:14px;transform:scaleX(0.857);transform-origin:0 0;">897.55</div>
<div class="a" style="left:1098px;top:246px;width:1px;height:25px;background:#a0ccf8"></div>
<div class="a" style="left:1102px;top:251px;line-height:16px;font-family:'Liberation Serif',serif;font-size:14px;transform:scaleX(0.857);transform-origin:0 0;">299.18</div>
<div class="a" style="left:1177px;top:246px;width:1px;height:25px;background:#a0ccf8"></div>
<div class="a" style="left:1181px;top:251px;line-height:16px;font-family:'Liberation Serif',serif;font-size:14px;transform:scaleX(0.857);transform-origin:0 0;">0</div>
<div class="a" style="left:1280px;top:246px;width:1px;height:25px;background:#a0ccf8"></div>
<div class="a" style="left:1284px;top:251px;line-height:16px;font-family:'Liberation Serif',serif;font-size:14px;transform:scaleX(0.857);transform-origin:0 0;">598.37</div>
<div class="a" style="left:1359px;top:246px;width:1px;height:25px;background:#a0ccf8"></div>
<div class="a" style="left:1363px;top:251px;line-height:16px;font-family:'Liberation Serif',serif;font-size:14px;transform:scaleX(0.857);transform-origin:0 0;">0</div>
<div class="a" style="left:1436px;top:246px;width:1px;height:25px;background:#a0ccf8"></div>
<div class="a" style="left:1440px;top:251px;line-height:16px;font-family:'Liberation Serif',serif;font-size:14px;transform:scaleX(0.857);transform-origin:0 0;">0</div>
<div class="a" style="left:1521px;top:246px;width:1px;height:25px;background:#a0ccf8"></div>
<div class="a" style="left:1525px;top:250px;line-height:16px;">已缴</div>
<div class="a" style="left:1598px;top:246px;width:1px;height:25px;background:#a0ccf8"></div>
<div class="a" style="left:1602px;top:251px;line-height:16px;font-family:'Liberation Serif',serif;font-size:14px;transform:scaleX(0.857);transform-origin:0 0;">10006226</div>
<div class="a" style="left:1675px;top:246px;width:1px;height:25px;background:#a0ccf8"></div>
<div class="a" style="left:1679px;top:250px;line-height:16px;">优易达(武汉)有限公司</div>
<div class="a" style="left:371px;top:272px;width:1432px;height:25px;background:#fff;border-bottom:1px solid #a0ccf8;border-left:1px solid #a0ccf8;border-right:1px solid #a0ccf8"></div>
<div class="a" style="left:375px;top:276px;line-height:16px;font-family:'Liberation Serif',serif;font-size:14px;transform:scaleX(0.857);transform-origin:0 0;">420117199008043569</div>
<div class="a" style="left:488px;top:271px;width:1px;height:25px;background:#a0ccf8"></div>
<div class="a" style="left:492px;top:275px;line-height:16px;">李志平</div>
<div class="a" style="left:564px;top:271px;width:1px;height:25px;background:#a0ccf8"></div>
<div class="a" style="left:568px;top:275px;line-height:16px;">生育</div>
<div class="a" style="left:640px;top:271px;width:1px;height:25px;background:#a0ccf8"></div>
<div class="a" style="left:644px;top:276px;line-height:16px;font-family:'Liberation Serif',serif;font-size:14px;transform:scaleX(0.857);transform-origin:0 0;">202104</div>
<div class="a" style="left:716px;top:271px;width:1px;height:25px;background:#a0ccf8"></div>
<div class="a" style="left:720px;top:276px;line-height:16px;font-family:'Liberation Serif',serif;font-size:14px;transform:scaleX(0.857);transform-origin:0 0;">202104</div>
<div class="a" style="left:792px;top:271px;width:1px;height:25px;background:#a0ccf8"></div>
<div class="a" style="left:796px;top:275px;line-height:16px;">月核定</div>
<div class="a" style="left:868px;top:271px;width:1px;height:25px;background:#a0ccf8"></div>
<div class="a" style="left:872px;top:275px;line-height:16px;">月度征收</div>
<div class="a" style="left:944px;top:271px;width:1px;height:25px;background:#a0ccf8"></div>
<div class="a" style="left:948px;top:276px;line-height:16px;font-family:'Liberation Serif',serif;font-size:14px;transform:scaleX(0.857);transform-origin:0 0;">3739.8</div>
<div class="a" style="left:1021px;top:271px;width:1px;height:25px;background:#a0ccf8"></div>
<div class="a" style="left:1025px;top:276px;line-height:16px;font-family:'Liberation Serif',serif;font-size:14px;transform:scaleX(0.857);transform-origin:0 0;">26.18</div>
<div class="a" style="left:1098px;top:271px;width:1px;height:25px;background:#a0ccf8"></div>
<div class="a" style="left:1102px;top:276px;line-height:16px;font-family:'Liberation Serif',serif;font-size:14px;transform:scaleX(0.857);transform-origin:0 0;">0</div>
<div class="a" style="left:1177px;top:271px;width:1px;height:25px;background:#a0ccf8"></div>
<div class="a" style="left:1181px;top:276px;line-height:16px;font-family:'Liberation Serif',serif;font-size:14px;transform:scaleX(0.857);transform-origin:0 0;">0</div>
<div class="a" style="left:1280px;top:271px;width:1px;height:25px;background:#a0ccf8"></div>
<div class="a" style="left:1284px;top:276px;line-height:16px;font-family:'Liberation Serif',serif;font-size:14px;transform:scaleX(0.857);transform-origin:0 0;">26.18</div>
<div class="a" style="left:1359px;top:271px;width:1px;height:25px;background:#a0ccf8"></div>
<div class="a" style="left:1363px;top:276px;line-height:16px;font-family:'Liberation Serif',serif;font-size:14px;transform:scaleX(0.857);transform-origin:0 0;">0</div>
<div class="a" style="left:1436px;top:271px;width:1px;height:25px;background:#a0ccf8"></div>
<div class="a" style="left:1440px;top:276px;line-height:16px;font-family:'Liberation Serif',serif;font-size:14px;transform:scaleX(0.857);transform-origin:0 0;">0</div>
<div class="a" style="left:1521px;top:271px;width:1px;height:25px;background:#a0ccf8"></div>
<div class="a" style="left:1525px;top:275px;line-height:16px;">已缴</div>
<div class="a" style="left:1598px;top:271px;width:1px;height:25px;background:#a0ccf8"></div>
<div class="a" style="left:1602px;top:276px;line-height:16px;font-family:'Liberation Serif',serif;font-size:14px;transform:scaleX(0.857);transform-origin:0 0;">10006226</div>
<div class="a" style="left:1675px;top:271px;width:1px;height:25px;background:#a0ccf8"></div>
<div class="a" style="left:1679px;top:275px;line-height:16px;">优易达(武汉)有限公司</div>
<div class="a" style="left:371px;top:297px;width:1432px;height:25px;background:#ebebeb;border-bottom:1px solid #a0ccf8;border-left:1px solid #a0ccf8;border-right:1px solid #a0ccf8"></div>
<div class="a" style="left:375px;top:301px;line-height:16px;font-family:'Liberation Serif',serif;font-size:14px;transform:scaleX(0.857);transform-origin:0 0;">420117199008043569</div>
<div class="a" style="left:488px;top:296px;width:1px;height:25px;background:#a0ccf8"></div>
<div class="a" style="left:492px;top:300px;line-height:16px;">李志平</div>
<div class="a" style="left:564px;top:296px;width:1px;height:25px;background:#a0ccf8"></div>
<div class="a" style="left:568px;top:300px;line-height:16px;">工伤</div>
<div class="a" style="left:640px;top:296px;width:1px;height:25px;background:#a0ccf8"></div>
<div class="a" style="left:644px;top:301px;line-height:16px;font-family:'Liberation Serif',serif;font-size:14px;transform:scaleX(0.857);transform-origin:0 0;">202104</div>
<div class="a" style="left:716px;top:296px;width:1px;height:25px;background:#a0ccf8"></div>
<div class="a" style="left:720px;top:301px;line-height:16px;font-family:'Liberation Serif',serif;font-size:14px;transform:scaleX(0.857);transform-origin:0 0;">202104</div>
<div class="a" style="left:792px;top:296px;width:1px;height:25px;background:#a0ccf8"></div>
<div class="a" style="left:796px;top:300px;line-height:16px;">月核定</div>
<div class="a" style="left:868px;top:296px;width:1px;height:25px;background:#a0ccf8"></div>
<div class="a" style="left:872px;top:300px;line-height:16px;">月度征收</div>
<div class="a" style="left:944px;top:296px;width:1px;height:25px;background:#a0ccf8"></div>
<div class="a" style="left:948px;top:301px;line-height:16px;font-family:'Liberation Serif',serif;font-size:14px;transform:scaleX(0.857);transform-origin:0 0;">3739.8</div>
<div class="a" style="left:1021px;top:296px;width:1px;height:25px;background:#a0ccf8"></div>
<div class="a" style="left:1025px;top:301px;line-height:16px;font-family:'Liberation Serif',serif;font-size:14px;transform:scaleX(0.857);transform-origin:0 0;">8.98</div>
<div class="a" style="left:1098px;top:296px;width:1px;height:25px;background:#a0ccf8"></div>
<div class="a" style="left:1102px;top:301px;line-height:16px;font-family:'Liberation Serif',serif;font-size:14px;transform:scaleX(0.857);transform-origin:0 0;">0</div>
<div class="a" style="left:1177px;top:296px;width:1px;height:25px;background:#a0ccf8"></div>
<div class="a" style="left:1181px;top:301px;line-height:16px;font-family:'Liberation Serif',serif;font-size:14px;transform:scaleX(0.857);transform-origin:0 0;">0</div>
<div class="a" style="left:1280px;top:296px;width:1px;height:25px;background:#a0ccf8"></div>
<div class="a" style="left:1284px;top:301px;line-height:16px;font-family:'Liberation Serif',serif;font-size:14px;transform:scaleX(0.857);transform-origin:0 0;">8.98</div>
<div class="a" style="left:1359px;top:296px;width:1px;height:25px;background:#a0ccf8"></div>
<div class="a" style="left:1363px;top:301px;line-height:16px;font-family:'Liberation Serif',serif;font-size:14px;transform:scaleX(0.857);transform-origin:0 0;">0</div>
<div class="a" style="left:1436px;top:296px;width:1px;height:25px;background:#a0ccf8"></div>
<div class="a" style="left:1440px;top:301px;line-height:16px;font-family:'Liberation Serif',serif;font-size:14px;transform:scaleX(0.857);transform-origin:0 0;">0</div>
<div class="a" style="left:1521px;top:296px;width:1px;height:25px;background:#a0ccf8"></div>
<div class="a" style="left:1525px;top:300px;line-height:16px;">已缴</div>
<div class="a" style="left:1598px;top:296px;width:1px;height:25px;background:#a0ccf8"></div>
<div class="a" style="left:1602px;top:301px;line-height:16px;font-family:'Liberation Serif',serif;font-size:14px;transform:scaleX(0.857);transform-origin:0 0;">10006226</div>
<div class="a" style="left:1675px;top:296px;width:1px;height:25px;background:#a0ccf8"></div>
<div class="a" style="left:1679px;top:300px;line-height:16px;">优易达(武汉)有限公司</div>
<div class="a" style="left:371px;top:322px;width:1432px;height:25px;background:#fff;border-bottom:1px solid #a0ccf8;border-left:1px solid #a0ccf8;border-right:1px solid #a0ccf8"></div>
<div class="a" style="left:375px;top:326px;line-height:16px;font-family:'Liberation Serif',serif;font-size:14px;transform:scaleX(0.857);transform-origin:0 0;">420117199008043569</div>
<div class="a" style="left:488px;top:321px;width:1px;height:25px;background:#a0ccf8"></div>
<div class="a" style="left:492px;top:325px;line-height:16px;">李志平</div>
<div class="a" style="left:564px;top:321px;width:1px;height:25px;background:#a0ccf8"></div>
<div class="a" style="left:568px;top:325px;line-height:16px;">失业</div>
<div class="a" style="left:640px;top:321px;width:1px;height:25px;background:#a0ccf8"></div>
<div class="a" style="left:644px;top:326px;line-height:16px;font-family:'Liberation Serif',serif;font-size:14px;transform:scaleX(0.857);transform-origin:0 0;">202104</div>
<div class="a" style="left:716px;top:321px;width:1px;height:25px;background:#a0ccf8"></div>
<div class="a" style="left:720px;top:326px;line-height:16px;font-family:'Liberation Serif',serif;font-size:14px;transform:scaleX(0.857);transform-origin:0 0;">202104</div>
<div class="a" style="left:792px;top:321px;width:1px;height:25px;background:#a0ccf8"></div>
<div class="a" style="left:796px;top:325px;line-height:16px;">月核定</div>
<div class="a" style="left:868px;top:321px;width:1px;height:25px;background:#a0ccf8"></div>
<div class="a" style="left:872px;top:325px;line-height:16px;">月度征收</div>
<div class="a" style="left:944px;top:321px;width:1px;height:25px;background:#a0ccf8"></div>
<div class="a" style="left:948px;top:326px;line-height:16px;font-family:'Liberation Serif',serif;font-size:14px;transform:scaleX(0.857);transform-origin:0 0;">3739.8</div>
<div class="a" style="left:1021px;top:321px;width:1px;height:25px;background:#a0ccf8"></div>
<div class="a" style="left:1025px;top:326px;line-height:16px;font-family:'Liberation Serif',serif;font-size:14px;transform:scaleX(0.857);transform-origin:0 0;">37.4</div>
<div class="a" style="left:1098px;top:321px;width:1px;height:25px;background:#a0ccf8"></div>
<div class="a" style="left:1102px;top:326px;line-height:16px;font-family:'Liberation Serif',serif;font-size:14px;transform:scaleX(0.857);transform-origin:0 0;">11.22</div>
<div class="a" style="left:1177px;top:321px;width:1px;height:25px;background:#a0ccf8"></div>
<div class="a" style="left:1181px;top:326px;line-height:16px;font-family:'Liberation Serif',serif;font-size:14px;transform:scaleX(0.857);transform-origin:0 0;">0</div>
<div class="a" style="left:1280px;top:321px;width:1px;height:25px;background:#a0ccf8"></div>
<div class="a" style="left:1284px;top:326px;line-height:16px;font-family:'Liberation Serif',serif;font-size:14px;transform:scaleX(0.857);transform-origin:0 0;">26.18</div>
<div class="a" style="left:1359px;top:321px;width:1px;height:25px;background:#a0ccf8"></div>
<div class="a" style="left:1363px;top:326px;line-height:16px;font-family:'Liberation Serif',serif;font-size:14px;transform:scaleX(0.857);transform-origin:0 0;">0</div>
<div class="a" style="left:1436px;top:321px;width:1px;height:25px;background:#a0ccf8"></div>
<div class="a" style="left:1440px;top:326px;line-height:16px;font-family:'Liberation Serif',serif;font-size:14px;transform:scaleX(0.857);transform-origin:0 0;">0</div>
<div class="a" style="left:1521px;top:321px;width:1px;height:25px;background:#a0ccf8"></div>
<div class="a" style="left:1525px;top:325px;line-height:16px;">已缴</div>
<div class="a" style="left:1598px;top:321px;width:1px;height:25px;background:#a0ccf8"></div>
<div class="a" style="left:1602px;top:326px;line-height:16px;font-family:'Liberation Serif',serif;font-size:14px;transform:scaleX(0.857);transform-origin:0 0;">10006226</div>
<div class="a" style="left:1675px;top:321px;width:1px;height:25px;background:#a0ccf8"></div>
<div class="a" style="left:1679px;top:325px;line-height:16px;">优易达(武汉)有限公司</div>
<div class="a" style="left:371px;top:347px;width:1432px;height:25px;background:#ebebeb;border-bottom:1px solid #a0ccf8;border-left:1px solid #a0ccf8;border-right:1px solid #a0ccf8"></div>
<div class="a" style="left:375px;top:351px;line-height:16px;font-family:'Liberation Serif',serif;font-size:14px;transform:scaleX(0.857);transform-origin:0 0;">420117199008043569</div>
<div class="a" style="left:488px;top:346px;width:1px;height:25px;background:#a0ccf8"></div>
<div class="a" style="left:492px;top:350px;line-height:16px;">李志平</div>
<div class="a" style="left:564px;top:346px;width:1px;height:25px;background:#a0ccf8"></div>
<div class="a" style="left:568px;top:350px;line-height:16px;">大额医疗</div>
<div class="a" style="left:640px;top:346px;width:1px;height:25px;background:#a0ccf8"></div>
<div class="a" style="left:644px;top:351px;line-height:16px;font-family:'Liberation Serif',serif;font-size:14px;transform:scaleX(0.857);transform-origin:0 0;">202104</div>
<div class="a" style="left:716px;top:346px;width:1px;height:25px;background:#a0ccf8"></div>
<div class="a" style="left:720px;top:351px;line-height:16px;font-family:'Liberation Serif',serif;font-size:14px;transform:scaleX(0.857);transform-origin:0 0;">202104</div>
<div class="a" style="left:792px;top:346px;width:1px;height:25px;background:#a0ccf8"></div>
<div class="a" style="left:796px;top:350px;line-height:16px;">月核定</div>
<div class="a" style="left:868px;top:346px;width:1px;height:25px;background:#a0ccf8"></div>
<div class="a" style="left:872px;top:350px;line-height:16px;">月度征收</div>
<div class="a" style="left:944px;top:346px;width:1px;height:25px;background:#a0ccf8"></div>
<div class="a" style="left:948px;top:351px;line-height:16px;font-family:'Liberation Serif',serif;font-size:14px;transform:scaleX(0.857);transform-origin:0 0;">7</div>
<div class="a" style="left:1021px;top:346px;width:1px;height:25px;background:#a0ccf8"></div>
<div class="a" style="left:1025px;top:351px;line-height:16px;font-family:'Liberation Serif',serif;font-size:14px;transform:scaleX(0.857);transform-origin:0 0;">7</div>
<div class="a" style="left:1098px;top:346px;width:1px;height:25px;background:#a0ccf8"></div>
<div class="a" style="left:1102px;top:351px;line-height:16px;font-family:'Liberation Serif',serif;font-size:14px;transform:scaleX(0.857);transform-origin:0 0;">7</div>
<div class="a" style="left:1177px;top:346px;width:1px;height:25px;background:#a0ccf8"></div>
<div class="a" style="left:1181px;top:351px;line-height:16px;font-family:'Liberation Serif',serif;font-size:14px;transform:scaleX(0.857);transform-origin:0 0;">0</div>
<div class="a" style="left:1280px;top:346px;width:1px;height:25px;background:#a0ccf8"></div>
<div class="a" style="left:1284px;top:351px;line-height:16px;font-family:'Liberation Serif',serif;font-size:14px;transform:scaleX(0.857);transform-origin:0 0;">0</div>
<div class="a" style="left:1359px;top:346px;width:1px;height:25px;background:#a0ccf8"></div>
<div class="a" style="left:1363px;top:351px;line-height:16px;font-family:'Liberation Serif',serif;font-size:14px;transform:scaleX(0.857);transform-origin:0 0;">0</div>
<div class="a" style="left:1436px;top:346px;width:1px;height:25px;background:#a0ccf8"></div>
<div class="a" style="left:1440px;top:351px;line-height:16px;font-family:'Liberation Serif',serif;font-size:14px;transform:scaleX(0.857);transform-origin:0 0;">0</div>
<div class="a" style="left:1521px;top:346px;width:1px;height:25px;background:#a0ccf8"></div>
<div class="a" style="left:1525px;top:350px;line-height:16px;">已缴</div>
<div class="a" style="left:1598px;top:346px;width:1px;height:25px;background:#a0ccf8"></div>
<div class="a" style="left:1602px;top:351px;line-height:16px;font-family:'Liberation Serif',serif;font-size:14px;transform:scaleX(0.857);transform-origin:0 0;">10006226</div>
<div class="a" style="left:1675px;top:346px;width:1px;height:25px;background:#a0ccf8"></div>
<div class="a" style="left:1679px;top:350px;line-height:16px;">优易达(武汉)有限公司</div>
<div class="a" style="left:371px;top:372px;width:1432px;height:25px;background:#fff;border-bottom:1px solid #a0ccf8;border-left:1px solid #a0ccf8;border-right:1px solid #a0ccf8"></div>
<div class="a" style="left:375px;top:376px;line-height:16px;font-family:'Liberation Serif',serif;font-size:14px;transform:scaleX(0.857);transform-origin:0 0;">420117199008043569</div>
<div class="a" style="left:488px;top:371px;width:1px;height:25px;background:#a0ccf8"></div>
<div class="a" style="left:492px;top:375px;line-height:16px;">李志平</div>
<div class="a" style="left:564px;top:371px;width:1px;height:25px;background:#a0ccf8"></div>
<div class="a" style="left:568px;top:375px;line-height:16px;">基本医疗</div>
<div class="a" style="left:640px;top:371px;width:1px;height:25px;background:#a0ccf8"></div>
<div class="a" style="left:644px;top:376px;line-height:16px;font-family:'Liberation Serif',serif;font-size:14px;transform:scaleX(0.857);transform-origin:0 0;">202104</div>
<div class="a" style="left:716px;top:371px;width:1px;height:25px;background:#a0ccf8"></div>
<div class="a" style="left:720px;top:376px;line-height:16px;font-family:'Liberation Serif',serif;font-size:14px;transform:scaleX(0.857);transform-origin:0 0;">202104</div>
<div class="a" style="left:792px;top:371px;width:1px;height:25px;background:#a0ccf8"></div>
<div class="a" style="left:796px;top:375px;line-height:16px;">月核定</div>
<div class="a" style="left:868px;top:371px;width:1px;height:25px;background:#a0ccf8"></div>
<div class="a" style="left:872px;top:375px;line-height:16px;">月度征收</div>
<div class="a" style="left:944px;top:371px;width:1px;height:25px;background:#a0ccf8"></div>
<div class="a" style="left:948px;top:376px;line-height:16px;font-family:'Liberation Serif',serif;font-size:14px;transform:scaleX(0.857);transform-origin:0 0;">3739.8</div>
<div class="a" style="left:1021px;top:371px;width:1px;height:25px;background:#a0ccf8"></div>
<div class="a" style="left:1025px;top:376px;line-height:16px;font-family:'Liberation Serif',serif;font-size:14px;transform:scaleX(0.857);transform-origin:0 0;">373.98</div>
<div class="a" style="left:1098px;top:371px;width:1px;height:25px;background:#a0ccf8"></div>
<div class="a" style="left:1102px;top:376px;line-height:16px;font-family:'Liberation Serif',serif;font-size:14px;transform:scaleX(0.857);transform-origin:0 0;">74.8</div>
<div class="a" style="left:1177px;top:371px;width:1px;height:25px;background:#a0ccf8"></div>
<div class="a" style="left:1181px;top:376px;line-height:16px;font-family:'Liberation Serif',serif;font-size:14px;transform:scaleX(0.857);transform-origin:0 0;">41.14</div>
<div class="a" style="left:1280px;top:371px;width:1px;height:25px;background:#a0ccf8"></div>
<div class="a" style="left:1284px;top:376px;line-height:16px;font-family:'Liberation Serif',serif;font-size:14px;transform:scaleX(0.857);transform-origin:0 0;">258.04</div>
<div class="a" style="left:1359px;top:371px;width:1px;height:25px;background:#a0ccf8"></div>
<div class="a" style="left:1363px;top:376px;line-height:16px;font-family:'Liberation Serif',serif;font-size:14px;transform:scaleX(0.857);transform-origin:0 0;">0</div>
<div class="a" style="left:1436px;top:371px;width:1px;height:25px;background:#a0ccf8"></div>
<div class="a" style="left:1440px;top:376px;line-height:16px;font-family:'Liberation Serif',serif;font-size:14px;transform:scaleX(0.857);transform-origin:0 0;">0</div>
<div class="a" style="left:1521px;top:371px;width:1px;height:25px;background:#a0ccf8"></div>
<div class="a" style="left:1525px;top:375px;line-height:16px;">已缴</div>
<div class="a" style="left:1598px;top:371px;width:1px;height:25px;background:#a0ccf8"></div>
<div class="a" style="left:1602px;top:376px;line-height:16px;font-family:'Liberation Serif',serif;font-size:14px;transform:scaleX(0.857);transform-origin:0 0;">10006226</div>
<div class="a" style="left:1675px;top:371px;width:1px;height:25px;background:#a0ccf8"></div>
<div class="a" style="left:1679px;top:375px;line-height:16px;">优易达(武汉)有限公司</div>
<div class="a" style="left:371px;top:397px;width:1432px;height:25px;background:#ebebeb;border-bottom:1px solid #a0ccf8;border-left:1px solid #a0ccf8;border-right:1px solid #a0ccf8"></div>
<div class="a" style="left:375px;top:401px;line-height:16px;font-family:'Liberation Serif',serif;font-size:14px;transform:scaleX(0.857);transform-origin:0 0;">420117199008043569</div>
<div class="a" style="left:488px;top:396px;width:1px;height:25px;background:#a0ccf8"></div>
<div class="a" style="left:492px;top:400px;line-height:16px;">李志平</div>
<div class="a" style="left:564px;top:396px;width:1px;height:25px;background:#a0ccf8"></div>
<div class="a" style="left:568px;top:400px;line-height:16px;">基本养老</div>
<div class="a" style="left:640px;top:396px;width:1px;height:25px;background:#a0ccf8"></div>
<div class="a" style="left:644px;top:401px;line-height:16px;font-family:'Liberation Serif',serif;font-size:14px;transform:scaleX(0.857);transform-origin:0 0;">202103</div>
<div class="a" style="left:716px;top:396px;width:1px;height:25px;background:#a0ccf8"></div>
<div class="a" style="left:720px;top:401px;line-height:16px;font-family:'Liberation Serif',serif;font-size:14px;transform:scaleX(0.857);transform-origin:0 0;">202103</div>
<div class="a" style="left:792px;top:396px;width:1px;height:25px;background:#a0ccf8"></div>
<div class="a" style="left:796px;top:400px;line-height:16px;">月核定</div>
<div class="a" style="left:868px;top:396px;width:1px;height:25px;background:#a0ccf8"></div>
<div class="a" style="left:872px;top:400px;line-height:16px;">月度征收</div>
<div class="a" style="left:944px;top:396px;width:1px;height:25px;background:#a0ccf8"></div>
<div class="a" style="left:948px;top:401px;line-height:16px;font-family:'Liberation Serif',serif;font-size:14px;transform:scaleX(0.857);transform-origin:0 0;">3739.8</div>
<div class="a" style="left:1021px;top:396px;width:1px;height:25px;background:#a0ccf8"></div>
<div class="a" style="left:1025px;top:401px;line-height:16px;font-family:'Liberation Serif',serif;font-size:14px;transform:scaleX(0.857);transform-origin:0 0;">897.55</div>
<div class="a" style="left:1098px;top:396px;width:1px;height:25px;background:#a0ccf8"></div>
<div class="a" style="left:1102px;top:401px;line-height:16px;font-family:'Liberation Serif',serif;font-size:14px;transform:scaleX(0.857);transform-origin:0 0;">299.18</div>
<div class="a" style="left:1177px;top:396px;width:1px;height:25px;background:#a0ccf8"></div>
<div class="a" style="left:1181px;top:401px;line-height:16px;font-family:'Liberation Serif',serif;font-size:14px;transform:scaleX(0.857);transform-origin:0 0;">0</div>
<div class="a" style="left:1280px;top:396px;width:1px;height:25px;background:#a0ccf8"></div>
<div class="a" style="left:1284px;top:401px;line-height:16px;font-family:'Liberation Serif',serif;font-size:14px;transform:scaleX(0.857);transform-origin:0 0;">598.37</div>
<div class="a" style="left:1359px;top:396px;width:1px;height:25px;background:#a0ccf8"></div>
<div class="a" style="left:1363px;top:401px;line-height:16px;font-family:'Liberation Serif',serif;font-size:14px;transform:scaleX(0.857);transform-origin:0 0;">0</div>
<div class="a" style="left:1436px;top:396px;width:1px;height:25px;background:#a0ccf8"></div>
<div class="a" style="left:1440px;top:401px;line-height:16px;font-family:'Liberation Serif',serif;font-size:14px;transform:scaleX(0.857);transform-origin:0 0;">0</div>
<div class="a" style="left:1521px;top:396px;width:1px;height:25px;background:#a0ccf8"></div>
<div class="a" style="left:1525px;top:400px;line-height:16px;">已缴</div>
<div class="a" style="left:1598px;top:396px;width:1px;height:25px;background:#a0ccf8"></div>
<div class="a" style="left:1602px;top:401px;line-height:16px;font-family:'Liberation Serif',serif;font-size:14px;transform:scaleX(0.857);transform-origin:0 0;">10006226</div>
<div class="a" style="left:1675px;top:396px;width:1px;height:25px;background:#a0ccf8"></div>
<div class="a" style="left:1679px;top:400px;line-height:16px;">优易达(武汉)有限公司</div>
<div class="a" style="left:371px;top:422px;width:1432px;height:25px;background:#fff;border-bottom:1px solid #a0ccf8;border-left:1px solid #a0ccf8;border-right:1px solid #a0ccf8"></div>
<div class="a" style="left:375px;top:426px;line-height:16px;font-family:'Liberation Serif',serif;font-size:14px;transform:scaleX(0.857);transform-origin:0 0;">420117199008043569</div>
<div class="a" style="left:488px;top:421px;width:1px;height:25px;background:#a0ccf8"></div>
<div class="a" style="left:492px;top:425px;line-height:16px;">李志平</div>
<div class="a" style="left:564px;top:421px;width:1px;height:25px;background:#a0ccf8"></div>
<div class="a" style="left:568px;top:425px;line-height:16px;">生育</div>
<div class="a" style="left:640px;top:421px;width:1px;height:25px;background:#a0ccf8"></div>
<div class="a" style="left:644px;top:426px;line-height:16px;font-family:'Liberation Serif',serif;font-size:14px;transform:scaleX(0.857);transform-origin:0 0;">202103</div>
<div class="a" style="left:716px;top:421px;width:1px;height:25px;background:#a0ccf8"></div>
<div class="a" style="left:720px;top:426px;line-height:16px;font-family:'Liberation Serif',serif;font-size:14px;transform:scaleX(0.857);transform-origin:0 0;">202103</div>
<div class="a" style="left:792px;top:421px;width:1px;height:25px;background:#a0ccf8"></div>
<div class="a" style="left:796px;top:425px;line-height:16px;">月核定</div>
<div class="a" style="left:868px;top:421px;width:1px;height:25px;background:#a0ccf8"></div>
<div class="a" style="left:872px;top:425px;line-height:16px;">月度征收</div>
<div class="a" style="left:944px;top:421px;width:1px;height:25px;background:#a0ccf8"></div>
<div class="a" style="left:948px;top:426px;line-height:16px;font-family:'Liberation Serif',serif;font-size:14px;transform:scaleX(0.857);transform-origin:0 0;">3739.8</div>
<div class="a" style="left:1021px;top:421px;width:1px;height:25px;background:#a0ccf8"></div>
<div class="a" style="left:1025px;top:426px;line-height:16px;font-family:'Liberation Serif',serif;font-size:14px;transform:scaleX(0.857);transform-origin:0 0;">26.18</div>
<div class="a" style="left:1098px;top:421px;width:1px;height:25px;background:#a0ccf8"></div>
<div class="a" style="left:1102px;top:426px;line-height:16px;font-family:'Liberation Serif',serif;font-size:14px;transform:scaleX(0.857);transform-origin:0 0;">0</div>
<div class="a" style="left:1177px;top:421px;width:1px;height:25px;background:#a0ccf8"></div>
<div class="a" style="left:1181px;top:426px;line-height:16px;font-family:'Liberation Serif',serif;font-size:14px;transform:scaleX(0.857);transform-origin:0 0;">0</div>
<div class="a" style="left:1280px;top:421px;width:1px;height:25px;background:#a0ccf8"></div>
<div class="a" style="left:1284px;top:426px;line-height:16px;font-family:'Liberation Serif',serif;font-size:14px;transform:scaleX(0.857);transform-origin:0 0;">26.18</div>
<div class="a" style="left:1359px;top:421px;width:1px;height:25px;background:#a0ccf8"></div>
<div class="a" style="left:1363px;top:426px;line-height:16px;font-family:'Liberation Serif',serif;font-size:14px;transform:scaleX(0.857);transform-origin:0 0;">0</div>
<div class="a" style="left:1436px;top:421px;width:1px;height:25px;background:#a0ccf8"></div>
<div class="a" style="left:1440px;top:426px;line-height:16px;font-family:'Liberation Serif',serif;font-size:14px;transform:scaleX(0.857);transform-origin:0 0;">0</div>
<div class="a" style="left:1521px;top:421px;width:1px;height:25px;background:#a0ccf8"></div>
<div class="a" style="left:1525px;top:425px;line-height:16px;">已缴</div>
<div class="a" style="left:1598px;top:421px;width:1px;height:25px;background:#a0ccf8"></div>
<div class="a" style="left:1602px;top:426px;line-height:16px;font-family:'Liberation Serif',serif;font-size:14px;transform:scaleX(0.857);transform-origin:0 0;">10006226</div>
<div class="a" style="left:1675px;top:421px;width:1px;height:25px;background:#a0ccf8"></div>
<div class="a" style="left:1679px;top:425px;line-height:16px;">优易达(武汉)有限公司</div>
<div class="a" style="left:371px;top:447px;width:1432px;height:25px;background:#ebebeb;border-bottom:1px solid #a0ccf8;border-left:1px solid #a0ccf8;border-right:1px solid #a0ccf8"></div>
<div class="a" style="left:375px;top:451px;line-height:16px;font-family:'Liberation Serif',serif;font-size:14px;transform:scaleX(0.857);transform-origin:0 0;">420117199008043569</div>
<div class="a" style="left:488px;top:446px;width:1px;height:25px;background:#a0ccf8"></div>
<div class="a" style="left:492px;top:450px;line-height:16px;">李志平</div>
<div class="a" style="left:564px;top:446px;width:1px;height:25px;background:#a0ccf8"></div>
<div class="a" style="left:568px;top:450px;line-height:16px;">工伤</div>
<div class="a" style="left:640px;top:446px;width:1px;height:25px;background:#a0ccf8"></div>
<div class="a" style="left:644px;top:451px;line-height:16px;font-family:'Liberation Serif',serif;font-size:14px;transform:scaleX(0.857);transform-origin:0 0;">202103</div>
<div class="a" style="left:716px;top:446px;width:1px;height:25px;background:#a0ccf8"></div>
<div class="a" style="left:720px;top:451px;line-height:16px;font-family:'Liberation Serif',serif;font-size:14px;transform:scaleX(0.857);transform-origin:0 0;">202103</div>
<div class="a" style="left:792px;top:446px;width:1px;height:25px;background:#a0ccf8"></div>
<div class="a" style="left:796px;top:450px;line-height:16px;">月核定</div>
<div class="a" style="left:868px;top:446px;width:1px;height:25px;background:#a0ccf8"></div>
<div class="a" style="left:872px;top:450px;line-height:16px;">月度征收</div>
<div class="a" style="left:944px;top:446px;width:1px;height:25px;background:#a0ccf8"></div>
<div class="a" style="left:948px;top:451px;line-height:16px;font-family:'Liberation Serif',serif;font-size:14px;transform:scaleX(0.857);transform-origin:0 0;">3739.8</div>
<div class="a" style="left:1021px;top:446px;width:1px;height:25px;background:#a0ccf8"></div>
<div class="a" style="left:1025px;top:451px;line-height:16px;font-family:'Liberation Serif',serif;font-size:14px;transform:scaleX(0.857);transform-origin:0 0;">8.98</div>
<div class="a" style="left:1098px;top:446px;width:1px;height:25px;background:#a0ccf8"></div>
<div class="a" style="left:1102px;top:451px;line-height:16px;font-family:'Liberation Serif',serif;font-size:14px;transform:scaleX(0.857);transform-origin:0 0;">0</div>
<div class="a" style="left:1177px;top:446px;width:1px;height:25px;background:#a0ccf8"></div>
<div class="a" style="left:1181px;top:451px;line-height:16px;font-family:'Liberation Serif',serif;font-size:14px;transform:scaleX(0.857);transform-origin:0 0;">0</div>
<div class="a" style="left:1280px;top:446px;width:1px;height:25px;background:#a0ccf8"></div>
<div class="a" style="left:1284px;top:451px;line-height:16px;font-family:'Liberation Serif',serif;font-size:14px;transform:scaleX(0.857);transform-origin:0 0;">8.98</div>
<div class="a" style="left:1359px;top:446px;width:1px;height:25px;background:#a0ccf8"></div>
<div class="a" style="left:1363px;top:451px;line-height:16px;font-family:'Liberation Serif',serif;font-size:14px;transform:scaleX(0.857);transform-origin:0 0;">0</div>
<div class="a" style="left:1436px;top:446px;width:1px;height:25px;background:#a0ccf8"></div>
<div class="a" style="left:1440px;top:451px;line-height:16px;font-family:'Liberation Serif',serif;font-size:14px;transform:scaleX(0.857);transform-origin:0 0;">0</div>
<div class="a" style="left:1521px;top:446px;width:1px;height:25px;background:#a0ccf8"></div>
<div class="a" style="left:1525px;top:450px;line-height:16px;">已缴</div>
<div class="a" style="left:1598px;top:446px;width:1px;height:25px;background:#a0ccf8"></div>
<div class="a" style="left:1602px;top:451px;line-height:16px;font-family:'Liberation Serif',serif;font-size:14px;transform:scaleX(0.857);transform-origin:0 0;">10006226</div>
<div class="a" style="left:1675px;top:446px;width:1px;height:25px;background:#a0ccf8"></div>
<div class="a" style="left:1679px;top:450px;line-height:16px;">优易达(武汉)有限公司</div>
<div class="a" style="left:371px;top:472px;width:1432px;height:25px;background:#fff;border-bottom:1px solid #a0ccf8;border-left:1px solid #a0ccf8;border-right:1px solid #a0ccf8"></div>
<div class="a" style="left:375px;top:476px;line-height:16px;font-family:'Liberation Serif',serif;font-size:14px;transform:scaleX(0.857);transform-origin:0 0;">420117199008043569</div>
<div class="a" style="left:488px;top:471px;width:1px;height:25px;background:#a0ccf8"></div>
<div class="a" style="left:492px;top:475px;line-height:16px;">李志平</div>
<div class="a" style="left:564px;top:471px;width:1px;height:25px;background:#a0ccf8"></div>
<div class="a" style="left:568px;top:475px;line-height:16px;">失业</div>
<div class="a" style="left:640px;top:471px;width:1px;height:25px;background:#a0ccf8"></div>
<div class="a" style="left:644px;top:476px;line-height:16px;font-family:'Liberation Serif',serif;font-size:14px;transform:scaleX(0.857);transform-origin:0 0;">202103</div>
<div class="a" style="left:716px;top:471px;width:1px;height:25px;background:#a0ccf8"></div>
<div class="a" style="left:720px;top:476px;line-height:16px;font-family:'Liberation Serif',serif;font-size:14px;transform:scaleX(0.857);transform-origin:0 0;">202103</div>
<div class="a" style="left:792px;top:471px;width:1px;height:25px;background:#a0ccf8"></div>
<div class="a" style="left:796px;top:475px;line-height:16px;">月核定</div>
<div class="a" style="left:868px;top:471px;width:1px;height:25px;background:#a0ccf8"></div>
<div class="a" style="left:872px;top:475px;line-height:16px;">月度征收</div>
<div class="a" style="left:944px;top:471px;width:1px;height:25px;background:#a0ccf8"></div>
<div class="a" style="left:948px;top:476px;line-height:16px;font-family:'Liberation Serif',serif;font-size:14px;transform:scaleX(0.857);transform-origin:0 0;">3739.8</div>
<div class="a" style="left:1021px;top:471px;width:1px;height:25px;background:#a0ccf8"></div>
<div class="a" style="left:1025px;top:476px;line-height:16px;font-family:'Liberation Serif',serif;font-size:14px;transform:scaleX(0.857);transform-origin:0 0;">37.4</div>
<div class="a" style="left:1098px;top:471px;width:1px;height:25px;background:#a0ccf8"></div>
<div class="a" style="left:1102px;top:476px;line-height:16px;font-family:'Liberation Serif',serif;font-size:14px;transform:scaleX(0.857);transform-origin:0 0;">11.22</div>
<div class="a" style="left:1177px;top:471px;width:1px;height:25px;background:#a0ccf8"></div>
<div class="a" style="left:1181px;top:476px;line-height:16px;font-family:'Liberation Serif',serif;font-size:14px;transform:scaleX(0.857);transform-origin:0 0;">0</div>
<div class="a" style="left:1280px;top:471px;width:1px;height:25px;background:#a0ccf8"></div>
<div class="a" style="left:1284px;top:476px;line-height:16px;font-family:'Liberation Serif',serif;font-size:14px;transform:scaleX(0.857);transform-origin:0 0;">26.18</div>
<div class="a" style="left:1359px;top:471px;width:1px;height:25px;background:#a0ccf8"></div>
<div class="a" style="left:1363px;top:476px;line-height:16px;font-family:'Liberation Serif',serif;font-size:14px;transform:scaleX(0.857);transform-origin:0 0;">0</div>
<div class="a" style="left:1436px;top:471px;width:1px;height:25px;background:#a0ccf8"></div>
<div class="a" style="left:1440px;top:476px;line-height:16px;font-family:'Liberation Serif',serif;font-size:14px;transform:scaleX(0.857);transform-origin:0 0;">0</div>
<div class="a" style="left:1521px;top:471px;width:1px;height:25px;background:#a0ccf8"></div>
<div class="a" style="left:1525px;top:475px;line-height:16px;">已缴</div>
<div class="a" style="left:1598px;top:471px;width:1px;height:25px;background:#a0ccf8"></div>
<div class="a" style="left:1602px;top:476px;line-height:16px;font-family:'Liberation Serif',serif;font-size:14px;transform:scaleX(0.857);transform-origin:0 0;">10006226</div>
<div class="a" style="left:1675px;top:471px;width:1px;height:25px;background:#a0ccf8"></div>
<div class="a" style="left:1679px;top:475px;line-height:16px;">优易达(武汉)有限公司</div>
<div class="a" style="left:371px;top:497px;width:1432px;height:25px;background:#ebebeb;border-bottom:1px solid #a0ccf8;border-left:1px solid #a0ccf8;border-right:1px solid #a0ccf8"></div>
<div class="a" style="left:375px;top:501px;line-height:16px;font-family:'Liberation Serif',serif;font-size:14px;transform:scaleX(0.857);transform-origin:0 0;">420117199008043569</div>
<div class="a" style="left:488px;top:496px;width:1px;height:25px;background:#a0ccf8"></div>
<div class="a" style="left:492px;top:500px;line-height:16px;">李志平</div>
<div class="a" style="left:564px;top:496px;width:1px;height:25px;background:#a0ccf8"></div>
<div class="a" style="left:568px;top:500px;line-height:16px;">大额医疗</div>
<div class="a" style="left:640px;top:496px;width:1px;height:25px;background:#a0ccf8"></div>
<div class="a" style="left:644px;top:501px;line-height:16px;font-family:'Liberation Serif',serif;font-size:14px;transform:scaleX(0.857);transform-origin:0 0;">202103</div>
<div class="a" style="left:716px;top:496px;width:1px;height:25px;background:#a0ccf8"></div>
<div class="a" style="left:720px;top:501px;line-height:16px;font-family:'Liberation Serif',serif;font-size:14px;transform:scaleX(0.857);transform-origin:0 0;">202103</div>
<div class="a" style="left:792px;top:496px;width:1px;height:25px;background:#a0ccf8"></div>
<div class="a" style="left:796px;top:500px;line-height:16px;">月核定</div>
<div class="a" style="left:868px;top:496px;width:1px;height:25px;background:#a0ccf8"></div>
<div class="a" style="left:872px;top:500px;line-height:16px;">月度征收</div>
<div class="a" style="left:944px;top:496px;width:1px;height:25px;background:#a0ccf8"></div>
<div class="a" style="left:948px;top:501px;line-height:16px;font-family:'Liberation Serif',serif;font-size:14px;transform:scaleX(0.857);transform-origin:0 0;">7</div>
<div class="a" style="left:1021px;top:496px;width:1px;height:25px;background:#a0ccf8"></div>
<div class="a" style="left:1025px;top:501px;line-height:16px;font-family:'Liberation Serif',serif;font-size:14px;transform:scaleX(0.857);transform-origin:0 0;">7</div>
<div class="a" style="left:1098px;top:496px;width:1px;height:25px;background:#a0ccf8"></div>
<div class="a" style="left:1102px;top:501px;line-height:16px;font-family:'Liberation Serif',serif;font-size:14px;transform:scaleX(0.857);transform-origin:0 0;">7</div>
<div class="a" style="left:1177px;top:496px;width:1px;height:25px;background:#a0ccf8"></div>
<div class="a" style="left:1181px;top:501px;line-height:16px;font-family:'Liberation Serif',serif;font-size:14px;transform:scaleX(0.857);transform-origin:0 0;">0</div>
<div class="a" style="left:1280px;top:496px;width:1px;height:25px;background:#a0ccf8"></div>
<div class="a" style="left:1284px;top:501px;line-height:16px;font-family:'Liberation Serif',serif;font-size:14px;transform:scaleX(0.857);transform-origin:0 0;">0</div>
<div class="a" style="left:1359px;top:496px;width:1px;height:25px;background:#a0ccf8"></div>
<div class="a" style="left:1363px;top:501px;line-height:16px;font-family:'Liberation Serif',serif;font-size:14px;transform:scaleX(0.857);transform-origin:0 0;">0</div>
<div class="a" style="left:1436px;top:496px;width:1px;height:25px;background:#a0ccf8"></div>
<div class="a" style="left:1440px;top:501px;line-height:16px;font-family:'Liberation Serif',serif;font-size:14px;transform:scaleX(0.857);transform-origin:0 0;">0</div>
<div class="a" style="left:1521px;top:496px;width:1px;height:25px;background:#a0ccf8"></div>
<div class="a" style="left:1525px;top:500px;line-height:16px;">已缴</div>
<div class="a" style="left:1598px;top:496px;width:1px;height:25px;background:#a0ccf8"></div>
<div class="a" style="left:1602px;top:501px;line-height:16px;font-family:'Liberation Serif',serif;font-size:14px;transform:scaleX(0.857);transform-origin:0 0;">10006226</div>
<div class="a" style="left:1675px;top:496px;width:1px;height:25px;background:#a0ccf8"></div>
<div class="a" style="left:1679px;top:500px;line-height:16px;">优易达(武汉)有限公司</div>
<div class="a" style="left:371px;top:522px;width:1432px;height:25px;background:#fff;border-bottom:1px solid #a0ccf8;border-left:1px solid #a0ccf8;border-right:1px solid #a0ccf8"></div>
<div class="a" style="left:375px;top:526px;line-height:16px;font-family:'Liberation Serif',serif;font-size:14px;transform:scaleX(0.857);transform-origin:0 0;">420117199008043569</div>
<div class="a" style="left:488px;top:521px;width:1px;height:25px;background:#a0ccf8"></div>
<div class="a" style="left:492px;top:525px;line-height:16px;">李志平</div>
<div class="a" style="left:564px;top:521px;width:1px;height:25px;background:#a0ccf8"></div>
<div class="a" style="left:568px;top:525px;line-height:16px;">基本医疗</div>
<div class="a" style="left:640px;top:521px;width:1px;height:25px;background:#a0ccf8"></div>
<div class="a" style="left:644px;top:526px;line-height:16px;font-family:'Liberation Serif',serif;font-size:14px;transform:scaleX(0.857);transform-origin:0 0;">202103</div>
<div class="a" style="left:716px;top:521px;width:1px;height:25px;background:#a0ccf8"></div>
<div class="a" style="left:720px;top:526px;line-height:16px;font-family:'Liberation Serif',serif;font-size:14px;transform:scaleX(0.857);transform-origin:0 0;">202103</div>
<div class="a" style="left:792px;top:521px;width:1px;height:25px;background:#a0ccf8"></div>
<div class="a" style="left:796px;top:525px;line-height:16px;">月核定</div>
<div class="a" style="left:868px;top:521px;width:1px;height:25px;background:#a0ccf8"></div>
<div class="a" style="left:872px;top:525px;line-height:16px;">月度征收</div>
<div class="a" style="left:944px;top:521px;width:1px;height:25px;background:#a0ccf8"></div>
<div class="a" style="left:948px;top:526px;line-height:16px;font-family:'Liberation Serif',serif;font-size:14px;transform:scaleX(0.857);transform-origin:0 0;">3739.8</div>
<div class="a" style="left:1021px;top:521px;width:1px;height:25px;background:#a0ccf8"></div>
<div class="a" style="left:1025px;top:526px;line-height:16px;font-family:'Liberation Serif',serif;font-size:14px;transform:scaleX(0.857);transform-origin:0 0;">373.98</div>
<div class="a" style="left:1098px;top:521px;width:1px;height:25px;background:#a0ccf8"></div>
<div class="a" style="left:1102px;top:526px;line-height:16px;font-family:'Liberation Serif',serif;font-size:14px;transform:scaleX(0.857);transform-origin:0 0;">74.8</div>
<div class="a" style="left:1177px;top:521px;width:1px;height:25px;background:#a0ccf8"></div>
<div class="a" style="left:1181px;top:526px;line-height:16px;font-family:'Liberation Serif',serif;font-size:14px;transform:scaleX(0.857);transform-origin:0 0;">41.14</div>
<div class="a" style="left:1280px;top:521px;width:1px;height:25px;background:#a0ccf8"></div>
<div class="a" style="left:1284px;top:526px;line-height:16px;font-family:'Liberation Serif',serif;font-size:14px;transform:scaleX(0.857);transform-origin:0 0;">258.04</div>
<div class="a" style="left:1359px;top:521px;width:1px;height:25px;background:#a0ccf8"></div>
<div class="a" style="left:1363px;top:526px;line-height:16px;font-family:'Liberation Serif',serif;font-size:14px;transform:scaleX(0.857);transform-origin:0 0;">0</div>
<div class="a" style="left:1436px;top:521px;width:1px;height:25px;background:#a0ccf8"></div>
<div class="a" style="left:1440px;top:526px;line-height:16px;font-family:'Liberation Serif',serif;font-size:14px;transform:scaleX(0.857);transform-origin:0 0;">0</div>
<div class="a" style="left:1521px;top:521px;width:1px;height:25px;background:#a0ccf8"></div>
<div class="a" style="left:1525px;top:525px;line-height:16px;">已缴</div>
<div class="a" style="left:1598px;top:521px;width:1px;height:25px;background:#a0ccf8"></div>
<div class="a" style="left:1602px;top:526px;line-height:16px;font-family:'Liberation Serif',serif;font-size:14px;transform:scaleX(0.857);transform-origin:0 0;">10006226</div>
<div class="a" style="left:1675px;top:521px;width:1px;height:25px;background:#a0ccf8"></div>
<div class="a" style="left:1679px;top:525px;line-height:16px;">优易达(武汉)有限公司</div>
<div class="a" style="left:371px;top:547px;width:1432px;height:25px;background:#ebebeb;border-bottom:1px solid #a0ccf8;border-left:1px solid #a0ccf8;border-right:1px solid #a0ccf8"></div>
<div class="a" style="left:375px;top:551px;line-height:16px;font-family:'Liberation Serif',serif;font-size:14px;transform:scaleX(0.857);transform-origin:0 0;">420117199008043569</div>
<div class="a" style="left:488px;top:546px;width:1px;height:25px;background:#a0ccf8"></div>
<div class="a" style="left:492px;top:550px;line-height:16px;">李志平</div>
<div class="a" style="left:564px;top:546px;width:1px;height:25px;background:#a0ccf8"></div>
<div class="a" style="left:568px;top:550px;line-height:16px;">基本养老</div>
<div class="a" style="left:640px;top:546px;width:1px;height:25px;background:#a0ccf8"></div>
<div class="a" style="left:644px;top:551px;line-height:16px;font-family:'Liberation Serif',serif;font-size:14px;transform:scaleX(0.857);transform-origin:0 0;">202102</div>
<div class="a" style="left:716px;top:546px;width:1px;height:25px;background:#a0ccf8"></div>
<div class="a" style="left:720px;top:551px;line-height:16px;font-family:'Liberation Serif',serif;font-size:14px;transform:scaleX(0.857);transform-origin:0 0;">202102</div>
<div class="a" style="left:792px;top:546px;width:1px;height:25px;background:#a0ccf8"></div>
<div class="a" style="left:796px;top:550px;line-height:16px;">月核定</div>
<div class="a" style="left:868px;top:546px;width:1px;height:25px;background:#a0ccf8"></div>
<div class="a" style="left:872px;top:550px;line-height:16px;">月度征收</div>
<div class="a" style="left:944px;top:546px;width:1px;height:25px;background:#a0ccf8"></div>
<div class="a" style="left:948px;top:551px;line-height:16px;font-family:'Liberation Serif',serif;font-size:14px;transform:scaleX(0.857);transform-origin:0 0;">3739.8</div>
<div class="a" style="left:1021px;top:546px;width:1px;height:25px;background:#a0ccf8"></div>
<div class="a" style="left:1025px;top:551px;line-height:16px;font-family:'Liberation Serif',serif;font-size:14px;transform:scaleX(0.857);transform-origin:0 0;">897.55</div>
<div class="a" style="left:1098px;top:546px;width:1px;height:25px;background:#a0ccf8"></div>
<div class="a" style="left:1102px;top:551px;line-height:16px;font-family:'Liberation Serif',serif;font-size:14px;transform:scaleX(0.857);transform-origin:0 0;">299.18</div>
<div class="a" style="left:1177px;top:546px;width:1px;height:25px;background:#a0ccf8"></div>
<div class="a" style="left:1181px;top:551px;line-height:16px;font-family:'Liberation Serif',serif;font-size:14px;transform:scaleX(0.857);transform-origin:0 0;">0</div>
<div class="a" style="left:1280px;top:546px;width:1px;height:25px;background:#a0ccf8"></div>
<div class="a" style="left:1284px;top:551px;line-height:16px;font-family:'Liberation Serif',serif;font-size:14px;transform:scaleX(0.857);transform-origin:0 0;">598.37</div>
<div class="a" style="left:1359px;top:546px;width:1px;height:25px;background:#a0ccf8"></div>
<div class="a" style="left:1363px;top:551px;line-height:16px;font-family:'Liberation Serif',serif;font-size:14px;transform:scaleX(0.857);transform-origin:0 0;">0</div>
<div class="a" style="left:1436px;top:546px;width:1px;height:25px;background:#a0ccf8"></div>
<div class="a" style="left:1440px;top:551px;line-height:16px;font-family:'Liberation Serif',serif;font-size:14px;transform:scaleX(0.857);transform-origin:0 0;">0</div>
<div class="a" style="left:1521px;top:546px;width:1px;height:25px;background:#a0ccf8"></div>
<div class="a" style="left:1525px;top:550px;line-height:16px;">已缴</div>
<div class="a" style="left:1598px;top:546px;width:1px;height:25px;background:#a0ccf8"></div>
<div class="a" style="left:1602px;top:551px;line-height:16px;font-family:'Liberation Serif',serif;font-size:14px;transform:scaleX(0.857);transform-origin:0 0;">10006226</div>
<div class="a" style="left:1675px;top:546px;width:1px;height:25px;background:#a0ccf8"></div>
<div class="a" style="left:1679px;top:550px;line-height:16px;">优易达(武汉)有限公司</div>
<div class="a" style="left:371px;top:572px;width:1432px;height:25px;background:#fff;border-bottom:1px solid #a0ccf8;border-left:1px solid #a0ccf8;border-right:1px solid #a0ccf8"></div>
<div class="a" style="left:375px;top:576px;line-height:16px;font-family:'Liberation Serif',serif;font-size:14px;transform:scaleX(0.857);transform-origin:0 0;">420117199008043569</div>
<div class="a" style="left:488px;top:571px;width:1px;height:25px;background:#a0ccf8"></div>
<div class="a" style="left:492px;top:575px;line-height:16px;">李志平</div>
<div class="a" style="left:564px;top:571px;width:1px;height:25px;background:#a0ccf8"></div>
<div class="a" style="left:568px;top:575px;line-height:16px;">基本医疗</div>
<div class="a" style="left:640px;top:571px;width:1px;height:25px;background:#a0ccf8"></div>
<div class="a" style="left:644px;top:576px;line-height:16px;font-family:'Liberation Serif',serif;font-size:14px;transform:scaleX(0.857);transform-origin:0 0;">202102</div>
<div class="a" style="left:716px;top:571px;width:1px;height:25px;background:#a0ccf8"></div>
<div class="a" style="left:720px;top:576px;line-height:16px;font-family:'Liberation Serif',serif;font-size:14px;transform:scaleX(0.857);transform-origin:0 0;">202102</div>
<div class="a" style="left:792px;top:571px;width:1px;height:25px;background:#a0ccf8"></div>
<div class="a" style="left:796px;top:575px;line-height:16px;">月核定</div>
<div class="a" style="left:868px;top:571px;width:1px;height:25px;background:#a0ccf8"></div>
<div class="a" style="left:872px;top:575px;line-height:16px;">月度征收</div>
<div class="a" style="left:944px;top:571px;width:1px;height:25px;background:#a0ccf8"></div>
<div class="a" style="left:948px;top:576px;line-height:16px;font-family:'Liberation Serif',serif;font-size:14px;transform:scaleX(0.857);transform-origin:0 0;">3739.8</div>
<div class="a" style="left:1021px;top:571px;width:1px;height:25px;background:#a0ccf8"></div>
<div class="a" style="left:1025px;top:576px;line-height:16px;font-family:'Liberation Serif',serif;font-size:14px;transform:scaleX(0.857);transform-origin:0 0;">373.98</div>
<div class="a" style="left:1098px;top:571px;width:1px;height:25px;background:#a0ccf8"></div>
<div class="a" style="left:1102px;top:576px;line-height:16px;font-family:'Liberation Serif',serif;font-size:14px;transform:scaleX(0.857);transform-origin:0 0;">74.8</div>
<div class="a" style="left:1177px;top:571px;width:1px;height:25px;background:#a0ccf8"></div>
<div class="a" style="left:1181px;top:576px;line-height:16px;font-family:'Liberation Serif',serif;font-size:14px;transform:scaleX(0.857);transform-origin:0 0;">41.14</div>
<div class="a" style="left:1280px;top:571px;width:1px;height:25px;background:#a0ccf8"></div>
<div class="a" style="left:1284px;top:576px;line-height:16px;font-family:'Liberation Serif',serif;font-size:14px;transform:scaleX(0.857);transform-origin:0 0;">258.04</div>
<div class="a" style="left:1359px;top:571px;width:1px;height:25px;background:#a0ccf8"></div>
<div class="a" style="left:1363px;top:576px;line-height:16px;font-family:'Liberation Serif',serif;font-size:14px;transform:scaleX(0.857);transform-origin:0 0;">0</div>
<div class="a" style="left:1436px;top:571px;width:1px;height:25px;background:#a0ccf8"></div>
<div class="a" style="left:1440px;top:576px;line-height:16px;font-family:'Liberation Serif',serif;font-size:14px;transform:scaleX(0.857);transform-origin:0 0;">0</div>
<div class="a" style="left:1521px;top:571px;width:1px;height:25px;background:#a0ccf8"></div>
<div class="a" style="left:1525px;top:575px;line-height:16px;">已缴</div>
<div class="a" style="left:1598px;top:571px;width:1px;height:25px;background:#a0ccf8"></div>
<div class="a" style="left:1602px;top:576px;line-height:16px;font-family:'Liberation Serif',serif;font-size:14px;transform:scaleX(0.857);transform-origin:0 0;">10006226</div>
<div class="a" style="left:1675px;top:571px;width:1px;height:25px;background:#a0ccf8"></div>
<div class="a" style="left:1679px;top:575px;line-height:16px;">优易达(武汉)有限公司</div>
<div class="a" style="left:371px;top:597px;width:1432px;height:25px;background:#ebebeb;border-bottom:1px solid #a0ccf8;border-left:1px solid #a0ccf8;border-right:1px solid #a0ccf8"></div>
<div class="a" style="left:375px;top:601px;line-height:16px;font-family:'Liberation Serif',serif;font-size:14px;transform:scaleX(0.857);transform-origin:0 0;">420117199008043569</div>
<div class="a" style="left:488px;top:596px;width:1px;height:25px;background:#a0ccf8"></div>
<div class="a" style="left:492px;top:600px;line-height:16px;">李志平</div>
<div class="a" style="left:564px;top:596px;width:1px;height:25px;background:#a0ccf8"></div>
<div class="a" style="left:568px;top:600px;line-height:16px;">大额医疗</div>
<div class="a" style="left:640px;top:596px;width:1px;height:25px;background:#a0ccf8"></div>
<div class="a" style="left:644px;top:601px;line-height:16px;font-family:'Liberation Serif',serif;font-size:14px;transform:scaleX(0.857);transform-origin:0 0;">202102</div>
<div class="a" style="left:716px;top:596px;width:1px;height:25px;background:#a0ccf8"></div>
<div class="a" style="left:720px;top:601px;line-height:16px;font-family:'Liberation Serif',serif;font-size:14px;transform:scaleX(0.857);transform-origin:0 0;">202102</div>
<div class="a" style="left:792px;top:596px;width:1px;height:25px;background:#a0ccf8"></div>
<div class="a" style="left:796px;top:600px;line-height:16px;">月核定</div>
<div class="a" style="left:868px;top:596px;width:1px;height:25px;background:#a0ccf8"></div>
<div class="a" style="left:872px;top:600px;line-height:16px;">月度征收</div>
<div class="a" style="left:944px;top:596px;width:1px;height:25px;background:#a0ccf8"></div>
<div class="a" style="left:948px;top:601px;line-height:16px;font-family:'Liberation Serif',serif;font-size:14px;transform:scaleX(0.857);transform-origin:0 0;">7</div>
<div class="a" style="left:1021px;top:596px;width:1px;height:25px;background:#a0ccf8"></div>
<div class="a" style="left:1025px;top:601px;line-height:16px;font-family:'Liberation Serif',serif;font-size:14px;transform:scaleX(0.857);transform-origin:0 0;">7</div>
<div class="a" style="left:1098px;top:596px;width:1px;height:25px;background:#a0ccf8"></div>
<div class="a" style="left:1102px;top:601px;line-height:16px;font-family:'Liberation Serif',serif;font-size:14px;transform:scaleX(0.857);transform-origin:0 0;">7</div>
<div class="a" style="left:1177px;top:596px;width:1px;height:25px;background:#a0ccf8"></div>
<div class="a" style="left:1181px;top:601px;line-height:16px;font-family:'Liberation Serif',serif;font-size:14px;transform:scaleX(0.857);transform-origin:0 0;">0</div>
<div class="a" style="left:1280px;top:596px;width:1px;height:25px;background:#a0ccf8"></div>
<div class="a" style="left:1284px;top:601px;line-height:16px;font-family:'Liberation Serif',serif;font-size:14px;transform:scaleX(0.857);transform-origin:0 0;">0</div>
<div class="a" style="left:1359px;top:596px;width:1px;height:25px;background:#a0ccf8"></div>
<div class="a" style="left:1363px;top:601px;line-height:16px;font-family:'Liberation Serif',serif;font-size:14px;transform:scaleX(0.857);transform-origin:0 0;">0</div>
<div class="a" style="left:1436px;top:596px;width:1px;height:25px;background:#a0ccf8"></div>
<div class="a" style="left:1440px;top:601px;line-height:16px;font-family:'Liberation Serif',serif;font-size:14px;transform:scaleX(0.857);transform-origin:0 0;">0</div>
<div class="a" style="left:1521px;top:596px;width:1px;height:25px;background:#a0ccf8"></div>
<div class="a" style="left:1525px;top:600px;line-height:16px;">已缴</div>
<div class="a" style="left:1598px;top:596px;width:1px;height:25px;background:#a0ccf8"></div>
<div class="a" style="left:1602px;top:601px;line-height:16px;font-family:'Liberation Serif',serif;font-size:14px;transform:scaleX(0.857);transform-origin:0 0;">10006226</div>
<div class="a" style="left:1675px;top:596px;width:1px;height:25px;background:#a0ccf8"></div>
<div class="a" style="left:1679px;top:600px;line-height:16px;">优易达(武汉)有限公司</div>
<div class="a" style="left:371px;top:622px;width:1432px;height:25px;background:#fff;border-bottom:1px solid #a0ccf8;border-left:1px solid #a0ccf8;border-right:1px solid #a0ccf8"></div>
<div class="a" style="left:375px;top:626px;line-height:16px;font-family:'Liberation Serif',serif;font-size:14px;transform:scaleX(0.857);transform-origin:0 0;">420117199008043569</div>
<div class="a" style="left:488px;top:621px;width:1px;height:25px;background:#a0ccf8"></div>
<div class="a" style="left:492px;top:625px;line-height:16px;">李志平</div>
<div class="a" style="left:564px;top:621px;width:1px;height:25px;background:#a0ccf8"></div>
<div class="a" style="left:568px;top:625px;line-height:16px;">失业</div>
<div class="a" style="left:640px;top:621px;width:1px;height:25px;background:#a0ccf8"></div>
<div class="a" style="left:644px;top:626px;line-height:16px;font-family:'Liberation Serif',serif;font-size:14px;transform:scaleX(0.857);transform-origin:0 0;">202102</div>
<div class="a" style="left:716px;top:621px;width:1px;height:25px;background:#a0ccf8"></div>
<div class="a" style="left:720px;top:626px;line-height:16px;font-family:'Liberation Serif',serif;font-size:14px;transform:scaleX(0.857);transform-origin:0 0;">202102</div>
<div class="a" style="left:792px;top:621px;width:1px;height:25px;background:#a0ccf8"></div>
<div class="a" style="left:796px;top:625px;line-height:16px;">月核定</div>
<div class="a" style="left:868px;top:621px;width:1px;height:25px;background:#a0ccf8"></div>
<div class="a" style="left:872px;top:625px;line-height:16px;">月度征收</div>
<div class="a" style="left:944px;top:621px;width:1px;height:25px;background:#a0ccf8"></div>
<div class="a" style="left:948px;top:626px;line-height:16px;font-family:'Liberation Serif',serif;font-size:14px;transform:scaleX(0.857);transform-origin:0 0;">3739.8</div>
<div class="a" style="left:1021px;top:621px;width:1px;height:25px;background:#a0ccf8"></div>
<div class="a" style="left:1025px;top:626px;line-height:16px;font-family:'Liberation Serif',serif;font-size:14px;transform:scaleX(0.857);transform-origin:0 0;">37.4</div>
<div class="a" style="left:1098px;top:621px;width:1px;height:25px;background:#a0ccf8"></div>
<div class="a" style="left:1102px;top:626px;line-height:16px;font-family:'Liberation Serif',serif;font-size:14px;transform:scaleX(0.857);transform-origin:0 0;">11.22</div>
<div class="a" style="left:1177px;top:621px;width:1px;height:25px;background:#a0ccf8"></div>
<div class="a" style="left:1181px;top:626px;line-height:16px;font-family:'Liberation Serif',serif;font-size:14px;transform:scaleX(0.857);transform-origin:0 0;">0</div>
<div class="a" style="left:1280px;top:621px;width:1px;height:25px;background:#a0ccf8"></div>
<div class="a" style="left:1284px;top:626px;line-height:16px;font-family:'Liberation Serif',serif;font-size:14px;transform:scaleX(0.857);transform-origin:0 0;">26.18</div>
<div class="a" style="left:1359px;top:621px;width:1px;height:25px;background:#a0ccf8"></div>
<div class="a" style="left:1363px;top:626px;line-height:16px;font-family:'Liberation Serif',serif;font-size:14px;transform:scaleX(0.857);transform-origin:0 0;">0</div>
<div class="a" style="left:1436px;top:621px;width:1px;height:25px;background:#a0ccf8"></div>
<div class="a" style="left:1440px;top:626px;line-height:16px;font-family:'Liberation Serif',serif;font-size:14px;transform:scaleX(0.857);transform-origin:0 0;">0</div>
<div class="a" style="left:1521px;top:621px;width:1px;height:25px;background:#a0ccf8"></div>
<div class="a" style="left:1525px;top:625px;line-height:16px;">已缴</div>
<div class="a" style="left:1598px;top:621px;width:1px;height:25px;background:#a0ccf8"></div>
<div class="a" style="left:1602px;top:626px;line-height:16px;font-family:'Liberation Serif',serif;font-size:14px;transform:scaleX(0.857);transform-origin:0 0;">10006226</div>
<div class="a" style="left:1675px;top:621px;width:1px;height:25px;background:#a0ccf8"></div>
<div class="a" style="left:1679px;top:625px;line-height:16px;">优易达(武汉)有限公司</div>
<div class="a" style="left:371px;top:647px;width:1432px;height:25px;background:#ebebeb;border-bottom:1px solid #a0ccf8;border-left:1px solid #a0ccf8;border-right:1px solid #a0ccf8"></div>
<div class="a" style="left:375px;top:651px;line-height:16px;font-family:'Liberation Serif',serif;font-size:14px;transform:scaleX(0.857);transform-origin:0 0;">420117199008043569</div>
<div class="a" style="left:488px;top:646px;width:1px;height:25px;background:#a0ccf8"></div>
<div class="a" style="left:492px;top:650px;line-height:16px;">李志平</div>
<div class="a" style="left:564px;top:646px;width:1px;height:25px;background:#a0ccf8"></div>
<div class="a" style="left:568px;top:650px;line-height:16px;">工伤</div>
<div class="a" style="left:640px;top:646px;width:1px;height:25px;background:#a0ccf8"></div>
<div class="a" style="left:644px;top:651px;line-height:16px;font-family:'Liberation Serif',serif;font-size:14px;transform:scaleX(0.857);transform-origin:0 0;">202102</div>
<div class="a" style="left:716px;top:646px;width:1px;height:25px;background:#a0ccf8"></div>
<div class="a" style="left:720px;top:651px;line-height:16px;font-family:'Liberation Serif',serif;font-size:14px;transform:scaleX(0.857);transform-origin:0 0;">202102</div>
<div class="a" style="left:792px;top:646px;width:1px;height:25px;background:#a0ccf8"></div>
<div class="a" style="left:796px;top:650px;line-height:16px;">月核定</div>
<div class="a" style="left:868px;top:646px;width:1px;height:25px;background:#a0ccf8"></div>
<div class="a" style="left:872px;top:650px;line-height:16px;">月度征收</div>
<div class="a" style="left:944px;top:646px;width:1px;height:25px;background:#a0ccf8"></div>
<div class="a" style="left:948px;top:651px;line-height:16px;font-family:'Liberation Serif',serif;font-size:14px;transform:scaleX(0.857);transform-origin:0 0;">3739.8</div>
<div class="a" style="left:1021px;top:646px;width:1px;height:25px;background:#a0ccf8"></div>
<div class="a" style="left:1025px;top:651px;line-height:16px;font-family:'Liberation Serif',serif;font-size:14px;transform:scaleX(0.857);transform-origin:0 0;">8.98</div>
<div class="a" style="left:1098px;top:646px;width:1px;height:25px;background:#a0ccf8"></div>
<div class="a" style="left:1102px;top:651px;line-height:16px;font-family:'Liberation Serif',serif;font-size:14px;transform:scaleX(0.857);transform-origin:0 0;">0</div>
<div class="a" style="left:1177px;top:646px;width:1px;height:25px;background:#a0ccf8"></div>
<div class="a" style="left:1181px;top:651px;line-height:16px;font-family:'Liberation Serif',serif;font-size:14px;transform:scaleX(0.857);transform-origin:0 0;">0</div>
<div class="a" style="left:1280px;top:646px;width:1px;height:25px;background:#a0ccf8"></div>
<div class="a" style="left:1284px;top:651px;line-height:16px;font-family:'Liberation Serif',serif;font-size:14px;transform:scaleX(0.857);transform-origin:0 0;">8.98</div>
<div class="a" style="left:1359px;top:646px;width:1px;height:25px;background:#a0ccf8"></div>
<div class="a" style="left:1363px;top:651px;line-height:16px;font-family:'Liberation Serif',serif;font-size:14px;transform:scaleX(0.857);transform-origin:0 0;">0</div>
<div class="a" style="left:1436px;top:646px;width:1px;height:25px;background:#a0ccf8"></div>
<div class="a" style="left:1440px;top:651px;line-height:16px;font-family:'Liberation Serif',serif;font-size:14px;transform:scaleX(0.857);transform-origin:0 0;">0</div>
<div class="a" style="left:1521px;top:646px;width:1px;height:25px;background:#a0ccf8"></div>
<div class="a" style="left:1525px;top:650px;line-height:16px;">已缴</div>
<div class="a" style="left:1598px;top:646px;width:1px;height:25px;background:#a0ccf8"></div>
<div class="a" style="left:1602px;top:651px;line-height:16px;font-family:'Liberation Serif',serif;font-size:14px;transform:scaleX(0.857);transform-origin:0 0;">10006226</div>
<div class="a" style="left:1675px;top:646px;width:1px;height:25px;background:#a0ccf8"></div>
<div class="a" style="left:1679px;top:650px;line-height:16px;">优易达(武汉)有限公司</div>
<div class="a" style="left:371px;top:672px;width:1432px;height:25px;background:#fff;border-bottom:1px solid #a0ccf8;border-left:1px solid #a0ccf8;border-right:1px solid #a0ccf8"></div>
<div class="a" style="left:375px;top:676px;line-height:16px;font-family:'Liberation Serif',serif;font-size:14px;transform:scaleX(0.857);transform-origin:0 0;">420117199008043569</div>
<div class="a" style="left:488px;top:671px;width:1px;height:25px;background:#a0ccf8"></div>
<div class="a" style="left:492px;top:675px;line-height:16px;">李志平</div>
<div class="a" style="left:564px;top:671px;width:1px;height:25px;background:#a0ccf8"></div>
<div class="a" style="left:568px;top:675px;line-height:16px;">生育</div>
<div class="a" style="left:640px;top:671px;width:1px;height:25px;background:#a0ccf8"></div>
<div class="a" style="left:644px;top:676px;line-height:16px;font-family:'Liberation Serif',serif;font-size:14px;transform:scaleX(0.857);transform-origin:0 0;">202102</div>
<div class="a" style="left:716px;top:671px;width:1px;height:25px;background:#a0ccf8"></div>
<div class="a" style="left:720px;top:676px;line-height:16px;font-family:'Liberation Serif',serif;font-size:14px;transform:scaleX(0.857);transform-origin:0 0;">202102</div>
<div class="a" style="left:792px;top:671px;width:1px;height:25px;background:#a0ccf8"></div>
<div class="a" style="left:796px;top:675px;line-height:16px;">月核定</div>
<div class="a" style="left:868px;top:671px;width:1px;height:25px;background:#a0ccf8"></div>
<div class="a" style="left:872px;top:675px;line-height:16px;">月度征收</div>
<div class="a" style="left:944px;top:671px;width:1px;height:25px;background:#a0ccf8"></div>
<div class="a" style="left:948px;top:676px;line-height:16px;font-family:'Liberation Serif',serif;font-size:14px;transform:scaleX(0.857);transform-origin:0 0;">3739.8</div>
<div class="a" style="left:1021px;top:671px;width:1px;height:25px;background:#a0ccf8"></div>
<div class="a" style="left:1025px;top:676px;line-height:16px;font-family:'Liberation Serif',serif;font-size:14px;transform:scaleX(0.857);transform-origin:0 0;">26.18</div>
<div class="a" style="left:1098px;top:671px;width:1px;height:25px;background:#a0ccf8"></div>
<div class="a" style="left:1102px;top:676px;line-height:16px;font-family:'Liberation Serif',serif;font-size:14px;transform:scaleX(0.857);transform-origin:0 0;">0</div>
<div class="a" style="left:1177px;top:671px;width:1px;height:25px;background:#a0ccf8"></div>
<div class="a" style="left:1181px;top:676px;line-height:16px;font-family:'Liberation Serif',serif;font-size:14px;transform:scaleX(0.857);transform-origin:0 0;">0</div>
<div class="a" style="left:1280px;top:671px;width:1px;height:25px;background:#a0ccf8"></div>
<div class="a" style="left:1284px;top:676px;line-height:16px;font-family:'Liberation Serif',serif;font-size:14px;transform:scaleX(0.857);transform-origin:0 0;">26.18</div>
<div class="a" style="left:1359px;top:671px;width:1px;height:25px;background:#a0ccf8"></div>
<div class="a" style="left:1363px;top:676px;line-height:16px;font-family:'Liberation Serif',serif;font-size:14px;transform:scaleX(0.857);transform-origin:0 0;">0</div>
<div class="a" style="left:1436px;top:671px;width:1px;height:25px;background:#a0ccf8"></div>
<div class="a" style="left:1440px;top:676px;line-height:16px;font-family:'Liberation Serif',serif;font-size:14px;transform:scaleX(0.857);transform-origin:0 0;">0</div>
<div class="a" style="left:1521px;top:671px;width:1px;height:25px;background:#a0ccf8"></div>
<div class="a" style="left:1525px;top:675px;line-height:16px;">已缴</div>
<div class="a" style="left:1598px;top:671px;width:1px;height:25px;background:#a0ccf8"></div>
<div class="a" style="left:1602px;top:676px;line-height:16px;font-family:'Liberation Serif',serif;font-size:14px;transform:scaleX(0.857);transform-origin:0 0;">10006226</div>
<div class="a" style="left:1675px;top:671px;width:1px;height:25px;background:#a0ccf8"></div>
<div class="a" style="left:1679px;top:675px;line-height:16px;">优易达(武汉)有限公司</div>
<div class="a" style="left:371px;top:697px;width:1432px;height:36px;border:1px solid #9cc4f2;border-top:none;background:linear-gradient(180deg,#e2eff9 0%,#d2e6f5 75%,#dfedf8 76%,#dfedf8 100%)"></div>
<div class="a" style="left:380px;top:720px;width:1px;height:12px;background:#fff"></div>
<svg class="a" style="left:400px;top:700px" width="72" height="14" viewBox="0 0 72 14">
<defs><linearGradient id="ng" x1="0" y1="0" x2="1" y2="0"><stop offset="0" stop-color="#8a8a8a"/><stop offset="0.5" stop-color="#d8d8d8"/><stop offset="1" stop-color="#8a8a8a"/></linearGradient>
<linearGradient id="nt" x1="0" y1="0" x2="0" y2="1"><stop offset="0" stop-color="#dcdcdc"/><stop offset="1" stop-color="#9a9a9a"/></linearGradient></defs>
<rect x="1.3" y="1.3" width="2.4" height="11.4" fill="url(#ng)" stroke="#707070" stroke-width="0.6"/>
<path d="M11,1.2 L5.2,7 L11,12.8 Z" fill="url(#nt)" stroke="#6c6c6c" stroke-width="0.6"/>
<path d="M29,1.2 L23.2,7 L29,12.8 Z" fill="url(#nt)" stroke="#6c6c6c" stroke-width="0.6"/>
<path d="M44,1.2 L49.8,7 L44,12.8 Z" fill="url(#nt)" stroke="#6c6c6c" stroke-width="0.6"/>
<path d="M61,1.2 L66.8,7 L61,12.8 Z" fill="url(#nt)" stroke="#6c6c6c" stroke-width="0.6"/>
<rect x="68.3" y="1.3" width="2.4" height="11.4" fill="url(#ng)" stroke="#707070" stroke-width="0.6"/>
</svg>
<div class="a" style="left:491px;top:699px;line-height:16px;white-space:normal;width:40px">翻到第<br>页</div>
<div class="a inp" style="left:528px;top:698px;width:64px;height:18px;border-color:#b8b0c8"></div>
<svg class="a" style="left:596px;top:709px" width="14" height="14" viewBox="0 0 14 14"><circle cx="6.7" cy="6.6" r="6.4" fill="#8e9f47"/><path d="M2.8,5 L6.5,5 L6.5,2.6 L11,6.6 L6.5,10.6 L6.5,8.2 L2.8,8.2 Z" fill="#fff"/></svg>
<div class="a" style="left:621px;top:706px;line-height:16px">每页显示</div>
<div class="a inp" style="left:676px;top:705px;width:58px;height:18px;border-color:#b8b0c8"></div>
<div class="a" style="left:680px;top:706px;line-height:16px">24</div>
<div class="a" style="left:734px;top:706px;line-height:16px">条记录</div>
<div class="a" style="left:794px;top:706px;line-height:16px">第</div>
<div class="a" style="left:812px;top:707px;line-height:16px;font-family:'Liberation Serif',serif;font-size:14px;transform:scaleX(0.857);transform-origin:0 0">1/1</div>
<div class="a" style="left:836px;top:706px;line-height:16px">页</div>
<div class="a" style="left:872px;top:706px;line-height:16px">共</div>
<div class="a" style="left:902px;top:707px;line-height:16px;font-family:'Liberation Serif',serif;font-size:14px;transform:scaleX(0.857);transform-origin:0 0">18</div>
<div class="a" style="left:931px;top:706px;line-height:16px">条</div>
<div class="a btn" style="left:1020px;top:741px;width:26px;height:18px;padding-top:2px">导出</div>
<div class="a btn" style="left:1081px;top:741px;width:44px;height:18px;padding-top:2px">导出<span style="display:inline-block;vertical-align:top;font-family:'Liberation Mono',monospace;font-size:12px;transform:scaleX(0.76);transform-origin:0 0">PDF</span></div>
</body></html>
